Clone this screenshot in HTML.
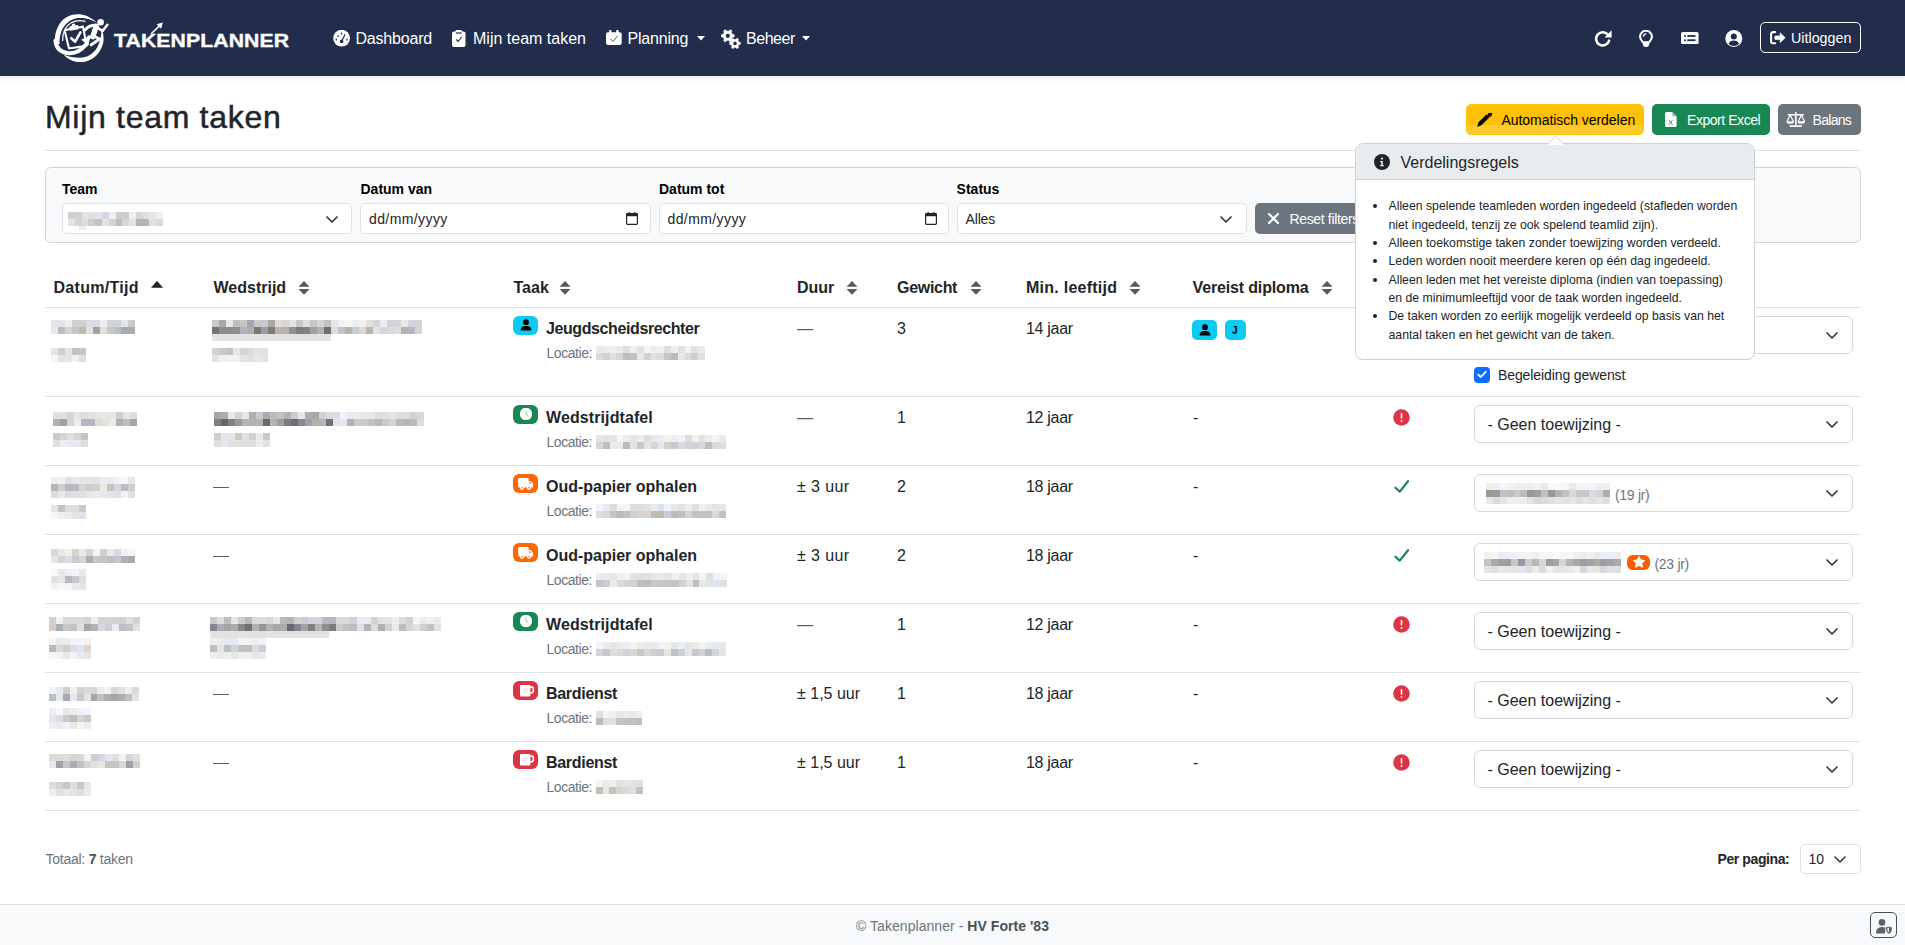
<!DOCTYPE html>
<html><head><meta charset="utf-8"><title>Mijn team taken</title>
<style>
html,body{margin:0;padding:0;background:#fff;width:1905px;height:945px;overflow:hidden;position:relative;font-family:"Liberation Sans", sans-serif;}
.a{position:absolute;display:block}
.t{position:absolute;white-space:nowrap;font-family:"Liberation Sans", sans-serif}
</style></head><body>
<div class="a" style="left:0.00px;top:0.00px;width:1905.00px;height:76.00px;background:#212d4b;box-shadow:0 3px 4px rgba(0,0,0,.075)"></div><svg class="a" style="left:50.00px;top:10.00px;" width="65" height="56" viewBox="0 0 65 56">
<path d="M5.2 34 C3.5 24 8 12 16.5 7.2 C24 3 36 2.5 46.5 12.5 C42 9.8 35 7.5 28.4 8 C20.5 8.8 14.5 14 11.5 21 C9.6 26 9.4 30.5 9.6 34 Z" fill="#fff"/>
<path d="M12.6 31 C12.5 23 15.5 16 21.5 12.6 C26 10.3 31 10.2 35.5 11.4" stroke="#fff" stroke-width="1.2" fill="none"/>
<path d="M13.5 44.5 C18 49.8 25 52.6 33 52 C42.5 51 50.8 43.5 53.3 32.5 C54.2 27.5 53.2 22 51.3 19 C51.8 24.5 50.5 31.5 47.2 37.5 C43.5 44 37 47.8 30 47.8 C24 47.8 18.5 46.6 13.5 44.5 Z" fill="#fff"/>
<path d="M20 49 C30 53.5 41 50.5 47.5 43" stroke="#fff" stroke-width="1.3" fill="none"/>
<path d="M5.4 30.5 C6.2 38.5 11 42.5 18.5 43.2 C26.5 44 31.5 40.2 36 34.6 L37 33.2" stroke="#fff" stroke-width="4" fill="none" stroke-linecap="round"/>
<path d="M40.6 25.8 L31.2 29.4 L38.2 35.8 Z" fill="#fff"/>
<path d="M14.5 20.1 L32.9 16.6 L35.3 28.2 M37.3 35.6 L19 38.5 L14.5 20.1" stroke="#fff" stroke-width="2.1" fill="none" stroke-linejoin="round"/>
<path d="M19.2 16.6 L27.8 15 L28.6 19.2 L20 20.8 Z" fill="#fff"/>
<circle cx="23.6" cy="15.2" r="1.8" fill="#fff"/>
<path d="M21.3 28.2 L25.2 31.7 L30.4 22.3" stroke="#fff" stroke-width="2.5" fill="none" stroke-linecap="round" stroke-linejoin="round"/>
<circle cx="50.6" cy="12.2" r="3.3" fill="#fff"/>
<path d="M35.2 19.8 C38.5 16.2 42 15 46 15.4" stroke="#fff" stroke-width="3" fill="none" stroke-linecap="round"/>
<path d="M46.2 16.2 L42.8 26.8" stroke="#fff" stroke-width="5.4" fill="none" stroke-linecap="round"/>
<path d="M47.5 17.8 L52.8 20.8 L57.4 14.8" stroke="#fff" stroke-width="2.6" fill="none" stroke-linecap="round" stroke-linejoin="round"/>
<path d="M43.5 26 L49.8 29 L41.2 34.8" stroke="#fff" stroke-width="3" fill="none" stroke-linecap="round" stroke-linejoin="round"/>
<path d="M43 26.5 L38.6 27 L37.2 30.5" stroke="#fff" stroke-width="2.8" fill="none" stroke-linecap="round" stroke-linejoin="round"/>
</svg><div class="t " style="left:114.00px;top:27.32px;font-size:19px;line-height:28px;font-weight:700;color:#fff;transform:scaleX(1.115);transform-origin:0 0;letter-spacing:0.1px;-webkit-text-stroke:0.35px #fff">TAKENPLANNER</div><svg class="a" style="left:150.00px;top:22.00px;" width="14" height="13" viewBox="0 0 14 13"><path d="M1.5 11.5 L10.5 2.8" stroke="#fff" stroke-width="1.6" stroke-linecap="round"/><path d="M12.8 0.6 L6.6 2.2 L11.2 6.8 Z" fill="#fff"/></svg><svg class="a" style="left:333.00px;top:29.70px;" width="17" height="17" viewBox="0 0 17 17"><circle cx="8.6" cy="8.2" r="8.4" fill="#fff"/><rect x="7.9" y="2.5" width="1.3" height="1.9" rx="0.5" fill="#212d4b"/><rect x="4.2" y="5.5" width="1.9" height="1.2" rx="0.5" fill="#212d4b"/><rect x="2.6" y="8.6" width="1.3" height="1.9" rx="0.5" fill="#212d4b"/><rect x="13.3" y="8.6" width="1.3" height="1.9" rx="0.5" fill="#212d4b"/><path d="M8.6 11.4 L11.8 4.7" stroke="#212d4b" stroke-width="1.2" stroke-linecap="round"/><circle cx="8.6" cy="11.4" r="1.8" fill="#212d4b"/></svg><div class="t " style="left:355.50px;top:26.96px;font-size:16px;line-height:24px;font-weight:400;color:#fff;letter-spacing:-0.2px">Dashboard</div><svg class="a" style="left:452.00px;top:29.50px;" width="14" height="17" viewBox="0 0 14 17"><rect x="0" y="1.5" width="13.5" height="15.5" rx="2" fill="#fff"/><rect x="3.5" y="0" width="6.5" height="3.5" rx="1.2" fill="#fff"/><rect x="3.8" y="2.4" width="5.9" height="1.2" fill="#212d4b"/><path d="M4.2 9.5 L6.2 11.5 L9.6 7" stroke="#212d4b" stroke-width="1.1" fill="none"/></svg><div class="t " style="left:473.00px;top:26.96px;font-size:16px;line-height:24px;font-weight:400;color:#fff;">Mijn team taken</div><svg class="a" style="left:605.50px;top:30.00px;" width="16" height="17" viewBox="0 0 16 17"><rect x="0" y="2.3" width="15.7" height="12.7" rx="2" fill="#fff"/><rect x="3" y="0" width="2.6" height="4" rx="1" fill="#fff"/><rect x="10.1" y="0" width="2.6" height="4" rx="1" fill="#fff"/><path d="M4.5 9 L7 11.5 L11.5 6" stroke="#212d4b" stroke-width="1" fill="none" opacity="0.8"/></svg><div class="t " style="left:627.50px;top:26.96px;font-size:16px;line-height:24px;font-weight:400;color:#fff;letter-spacing:-0.2px">Planning</div><svg class="a" style="left:697.00px;top:36.00px;" width="8" height="5" viewBox="0 0 8 5"><path d="M0 0 H8 L4 4.5 Z" fill="#fff"/></svg><svg class="a" style="left:721.00px;top:28.50px;" width="20" height="20" viewBox="0 0 20 20"><polygon points="11.43,5.24 13.32,5.77 13.32,7.83 11.43,8.36 10.46,10.03 10.95,11.93 9.17,12.96 7.77,11.59 5.83,11.59 4.43,12.96 2.65,11.93 3.14,10.03 2.17,8.36 0.28,7.83 0.28,5.77 2.17,5.24 3.14,3.57 2.65,1.67 4.43,0.64 5.83,2.01 7.77,2.01 9.17,0.64 10.95,1.67 10.46,3.57" fill="#fff" stroke="#fff" stroke-width="0.5" stroke-linejoin="round"/><circle cx="6.8" cy="6.8" r="2.11" fill="#212d4b"/><polygon points="17.93,13.08 19.53,13.52 19.53,15.28 17.93,15.72 17.11,17.14 17.52,18.75 16.01,19.63 14.82,18.46 13.18,18.46 11.99,19.63 10.48,18.75 10.89,17.14 10.07,15.72 8.47,15.28 8.47,13.52 10.07,13.08 10.89,11.66 10.48,10.05 11.99,9.17 13.18,10.34 14.82,10.34 16.01,9.17 17.52,10.05 17.11,11.66" fill="#fff" stroke="#fff" stroke-width="0.5" stroke-linejoin="round"/><circle cx="14" cy="14.4" r="1.79" fill="#212d4b"/></svg><div class="t " style="left:746.00px;top:26.96px;font-size:16px;line-height:24px;font-weight:400;color:#fff;letter-spacing:-0.45px">Beheer</div><svg class="a" style="left:802.00px;top:36.00px;" width="8" height="5" viewBox="0 0 8 5"><path d="M0 0 H8 L4 4.5 Z" fill="#fff"/></svg><svg class="a" style="left:1593.50px;top:29.50px;" width="18" height="17" viewBox="0 0 18 17"><path d="M14.2 5.2 A6.6 6.6 0 1 0 15.1 10.6" stroke="#fff" stroke-width="2.5" fill="none" stroke-linecap="round"/><path d="M17.6 0.3 V7.4 H10.6 Z" fill="#fff"/></svg><svg class="a" style="left:1639.00px;top:29.50px;" width="14" height="17" viewBox="0 0 14 17"><path d="M3.2 11.2 C1.7 9.8 1.1 8.4 1.1 6.6 A5.9 5.9 0 0 1 12.9 6.6 C12.9 8.4 12.3 9.8 10.8 11.2 L10.2 12.2 H3.8 Z" stroke="#fff" stroke-width="2.1" fill="none" stroke-linejoin="round"/><path d="M3.9 13 H10.1 V14.6 A2.4 2.4 0 0 1 7.7 17 H6.3 A2.4 2.4 0 0 1 3.9 14.6 Z" fill="#fff"/><path d="M4.6 6.2 A2.6 2.6 0 0 1 7 3.8" stroke="#fff" stroke-width="1.3" fill="none" stroke-linecap="round"/></svg><svg class="a" style="left:1681.00px;top:32.00px;" width="18" height="12.2" viewBox="0 0 18 12.2"><rect x="0" y="0" width="17.6" height="12.2" rx="1.8" fill="#fff"/><circle cx="4" cy="4" r="1" fill="#212d4b"/><rect x="6.3" y="3.1" width="8.2" height="1.8" fill="#212d4b"/><circle cx="4" cy="8.2" r="1" fill="#212d4b"/><rect x="6.3" y="7.3" width="8.2" height="1.8" fill="#212d4b"/></svg><svg class="a" style="left:1725.00px;top:29.50px;" width="18" height="17" viewBox="0 0 18 17"><circle cx="8.8" cy="8.5" r="8.5" fill="#fff"/><circle cx="8.8" cy="6.6" r="3" fill="#212d4b"/><path d="M3.6 13.8 C4.6 11.6 6.4 10.6 8.8 10.6 C11.2 10.6 13 11.6 14 13.8 C12.6 15.2 10.8 16 8.8 16 C6.8 16 5 15.2 3.6 13.8 Z" fill="#212d4b"/></svg><div class="a" style="left:1760.00px;top:22.00px;width:101.00px;height:31.00px;border:1px solid #fff;border-radius:5px;box-sizing:border-box"></div><svg class="a" style="left:1770.00px;top:30.60px;" width="16" height="14" viewBox="0 0 16 14"><path d="M5.2 1.1 H3 A1.9 1.9 0 0 0 1.1 3 V10.4 A1.9 1.9 0 0 0 3 12.3 H5.2" stroke="#fff" stroke-width="2.1" fill="none" stroke-linecap="round"/><path d="M15.2 6.7 L10.2 1.9 V5 H5.6 A0.9 0.9 0 0 0 4.7 5.9 V7.5 A0.9 0.9 0 0 0 5.6 8.4 H10.2 V11.5 Z" fill="#fff" stroke="#fff" stroke-width="0.7" stroke-linejoin="round"/></svg><div class="t " style="left:1791.00px;top:28.05px;font-size:14px;line-height:21px;font-weight:400;color:#fff;font-size:14.3px">Uitloggen</div><div class="t " style="left:45.00px;top:97.81px;font-size:32px;line-height:38px;font-weight:400;color:#212529;letter-spacing:0.7px;-webkit-text-stroke:0.5px #212529">Mijn team taken</div><div class="a" style="left:45.00px;top:150.00px;width:1816.00px;height:1.00px;background:#dee2e6"></div><div class="a" style="left:1466.00px;top:104.00px;width:178.00px;height:31.00px;background:linear-gradient(#ffc107 0 20px,#ffca2c 20px);border:1px solid #ffc107;border-radius:5px;box-sizing:border-box"></div><svg class="a" style="left:1477.00px;top:112.50px;" width="15" height="14" viewBox="0 0 15 14"><path d="M0.4 13.6 L1.86 9.26 L9.46 1.66 L12.14 4.34 L4.54 11.94 Z" fill="#000" stroke="#000" stroke-width="0.4" stroke-linejoin="round"/><path d="M11.9 1.2 L12.9 0.2" stroke="#000" stroke-width="3.8" stroke-linecap="round" transform="translate(0.6,0.6)"/></svg><div class="t " style="left:1501.50px;top:109.85px;font-size:14px;line-height:21px;font-weight:400;color:#000;letter-spacing:-0.05px">Automatisch verdelen</div><div class="a" style="left:1652.00px;top:104.00px;width:118.00px;height:31.00px;background:#198754;border-radius:5px"></div><svg class="a" style="left:1664.50px;top:112.00px;" width="12" height="15" viewBox="0 0 12 15"><path d="M0 1.6 A1.6 1.6 0 0 1 1.6 0 H7.4 L11.6 4.2 V13.4 A1.6 1.6 0 0 1 10 15 H1.6 A1.6 1.6 0 0 1 0 13.4 Z" fill="#fff"/><path d="M7.4 0 V4.2 H11.6" fill="#198754" opacity="0.5"/><path d="M4 8.2 L7.4 12.6 M7.4 8.2 L4 12.6" stroke="#198754" stroke-width="0.9"/></svg><div class="t " style="left:1687.00px;top:109.85px;font-size:14px;line-height:21px;font-weight:400;color:#fff;letter-spacing:-0.45px">Export Excel</div><div class="a" style="left:1778.00px;top:104.00px;width:83.00px;height:31.00px;background:#6c757d;border-radius:5px"></div><svg class="a" style="left:1786.00px;top:112.00px;" width="19.4" height="15" viewBox="0 0 19.4 15"><rect x="9" y="0" width="1.6" height="13" fill="#fff"/><rect x="1.6" y="2" width="16.4" height="1.6" rx="0.8" fill="#fff"/><rect x="3.5" y="13.2" width="12.6" height="1.8" rx="0.9" fill="#fff"/><path d="M4.2 3 L1 9.4 M4.2 3 L7.4 9.4" stroke="#fff" stroke-width="1.2"/><path d="M0.4 9.2 H8 A3.8 2.6 0 0 1 0.4 9.2 Z" fill="#fff"/><path d="M15.4 3 L12.2 9.4 M15.4 3 L18.6 9.4" stroke="#fff" stroke-width="1.2"/><path d="M11.6 9.2 H19.2 A3.8 2.6 0 0 1 11.6 9.2 Z" fill="#fff"/></svg><div class="t " style="left:1812.50px;top:109.85px;font-size:14px;line-height:21px;font-weight:400;color:#fff;letter-spacing:-0.7px">Balans</div><div class="a" style="left:45.00px;top:167.00px;width:1816.00px;height:76.00px;background:#f8f9fa;border:1px solid #d3d4d5;border-radius:6px;box-sizing:border-box"></div><div class="t " style="left:62.00px;top:179.15px;font-size:14px;line-height:21px;font-weight:700;color:#000;">Team</div><div class="t " style="left:360.50px;top:179.15px;font-size:14px;line-height:21px;font-weight:700;color:#000;">Datum van</div><div class="t " style="left:659.00px;top:179.15px;font-size:14px;line-height:21px;font-weight:700;color:#000;">Datum tot</div><div class="t " style="left:956.60px;top:179.15px;font-size:14px;line-height:21px;font-weight:700;color:#000;">Status</div><div class="a" style="left:62.00px;top:203.00px;width:290.20px;height:31.00px;background:#fff;border:1px solid #dee2e6;border-radius:5px;box-sizing:border-box"></div><svg class="a" style="left:325.50px;top:215.50px;" width="12" height="7" viewBox="0 0 12 7"><path d="M1 1 L6 6 L11 1" stroke="#343a40" stroke-width="1.7" fill="none" stroke-linecap="round" stroke-linejoin="round"/></svg><div class="a" style="left:360.40px;top:203.00px;width:290.20px;height:31.00px;background:#fff;border:1px solid #dee2e6;border-radius:5px;box-sizing:border-box"></div><svg class="a" style="left:626.40px;top:211.50px;" width="12" height="13" viewBox="0 0 12 13"><rect x="0.6" y="1.6" width="10.8" height="10.8" rx="0.8" stroke="#212529" stroke-width="1.2" fill="none"/><rect x="0.6" y="1.6" width="10.8" height="2.6" fill="#212529"/><rect x="2.6" y="0" width="1.2" height="2" fill="#212529"/><rect x="8.2" y="0" width="1.2" height="2" fill="#212529"/></svg><div class="a" style="left:658.70px;top:203.00px;width:290.20px;height:31.00px;background:#fff;border:1px solid #dee2e6;border-radius:5px;box-sizing:border-box"></div><svg class="a" style="left:924.70px;top:211.50px;" width="12" height="13" viewBox="0 0 12 13"><rect x="0.6" y="1.6" width="10.8" height="10.8" rx="0.8" stroke="#212529" stroke-width="1.2" fill="none"/><rect x="0.6" y="1.6" width="10.8" height="2.6" fill="#212529"/><rect x="2.6" y="0" width="1.2" height="2" fill="#212529"/><rect x="8.2" y="0" width="1.2" height="2" fill="#212529"/></svg><div class="a" style="left:956.60px;top:203.00px;width:290.20px;height:31.00px;background:#fff;border:1px solid #dee2e6;border-radius:5px;box-sizing:border-box"></div><svg class="a" style="left:1220.10px;top:215.50px;" width="12" height="7" viewBox="0 0 12 7"><path d="M1 1 L6 6 L11 1" stroke="#343a40" stroke-width="1.7" fill="none" stroke-linecap="round" stroke-linejoin="round"/></svg><svg class="a" style="left:68.00px;top:212.00px;shape-rendering:crispEdges" width="95" height="14" viewBox="0 0 95 14"><rect x="0.00" y="0.00" width="7.09" height="7.30" fill="rgb(205,209,214)"/><rect x="6.79" y="0.00" width="7.09" height="7.30" fill="rgb(211,209,211)"/><rect x="13.57" y="0.00" width="7.09" height="7.30" fill="rgb(227,229,229)"/><rect x="20.36" y="0.00" width="7.09" height="7.30" fill="rgb(224,223,225)"/><rect x="27.14" y="0.00" width="7.09" height="7.30" fill="rgb(222,227,236)"/><rect x="33.93" y="0.00" width="7.09" height="7.30" fill="rgb(212,214,222)"/><rect x="40.71" y="0.00" width="7.09" height="7.30" fill="rgb(239,239,236)"/><rect x="47.50" y="0.00" width="7.09" height="7.30" fill="rgb(210,205,205)"/><rect x="54.29" y="0.00" width="7.09" height="7.30" fill="rgb(206,205,204)"/><rect x="61.07" y="0.00" width="7.09" height="7.30" fill="rgb(235,240,250)"/><rect x="67.86" y="0.00" width="7.09" height="7.30" fill="rgb(215,213,215)"/><rect x="74.64" y="0.00" width="7.09" height="7.30" fill="rgb(225,225,225)"/><rect x="81.43" y="0.00" width="7.09" height="7.30" fill="rgb(232,230,229)"/><rect x="88.21" y="0.00" width="7.09" height="7.30" fill="rgb(240,239,243)"/><rect x="0.00" y="7.00" width="7.09" height="7.30" fill="rgb(226,230,233)"/><rect x="6.79" y="7.00" width="7.09" height="7.30" fill="rgb(211,212,211)"/><rect x="13.57" y="7.00" width="7.09" height="7.30" fill="rgb(222,219,219)"/><rect x="20.36" y="7.00" width="7.09" height="7.30" fill="rgb(210,205,200)"/><rect x="27.14" y="7.00" width="7.09" height="7.30" fill="rgb(197,193,193)"/><rect x="33.93" y="7.00" width="7.09" height="7.30" fill="rgb(228,225,225)"/><rect x="40.71" y="7.00" width="7.09" height="7.30" fill="rgb(205,210,219)"/><rect x="47.50" y="7.00" width="7.09" height="7.30" fill="rgb(190,189,191)"/><rect x="54.29" y="7.00" width="7.09" height="7.30" fill="rgb(214,214,219)"/><rect x="61.07" y="7.00" width="7.09" height="7.30" fill="rgb(232,227,224)"/><rect x="67.86" y="7.00" width="7.09" height="7.30" fill="rgb(185,180,180)"/><rect x="74.64" y="7.00" width="7.09" height="7.30" fill="rgb(178,181,189)"/><rect x="81.43" y="7.00" width="7.09" height="7.30" fill="rgb(225,225,229)"/><rect x="88.21" y="7.00" width="7.09" height="7.30" fill="rgb(220,218,213)"/></svg><div class="a" style="left:79.00px;top:226.00px;width:7.00px;height:4.00px;background:#ececec"></div><div class="t " style="left:369.00px;top:209.35px;font-size:14px;line-height:21px;font-weight:400;color:#212529;letter-spacing:0.4px">dd/mm/yyyy</div><div class="t " style="left:667.50px;top:209.35px;font-size:14px;line-height:21px;font-weight:400;color:#212529;letter-spacing:0.4px">dd/mm/yyyy</div><div class="t " style="left:965.60px;top:208.85px;font-size:14px;line-height:21px;font-weight:400;color:#212529;letter-spacing:-0.2px">Alles</div><div class="a" style="left:1255.00px;top:203.00px;width:290.00px;height:31.00px;background:#6c757d;border-radius:5px"></div><svg class="a" style="left:1267.50px;top:213.00px;" width="11" height="11" viewBox="0 0 11 11"><path d="M1 1 L10 10 M10 1 L1 10" stroke="#fff" stroke-width="2.2" stroke-linecap="round"/></svg><div class="t " style="left:1289.50px;top:208.85px;font-size:14px;line-height:21px;font-weight:400;color:#fff;letter-spacing:-0.35px">Reset filters</div><div class="t " style="left:53.50px;top:275.96px;font-size:16px;line-height:24px;font-weight:700;color:#212529;letter-spacing:0.3px">Datum/Tijd</div><svg class="a" style="left:151.00px;top:281.00px;" width="12" height="7" viewBox="0 0 12 7"><path d="M6 0.2 L11.5 6.4 H0.5 Z" fill="#212529" stroke="#212529" stroke-width="0.6" stroke-linejoin="round"/></svg><div class="t " style="left:213.50px;top:275.96px;font-size:16px;line-height:24px;font-weight:700;color:#212529;letter-spacing:0px">Wedstrijd</div><svg class="a" style="left:297.50px;top:281.00px;" width="12" height="14" viewBox="0 0 12 14"><path d="M6 0 L11.5 5.8 H0.5 Z M0.5 8 H11.5 L6 13.8 Z" fill="#555b61"/></svg><div class="t " style="left:513.50px;top:275.96px;font-size:16px;line-height:24px;font-weight:700;color:#212529;letter-spacing:0px">Taak</div><svg class="a" style="left:558.50px;top:281.00px;" width="12" height="14" viewBox="0 0 12 14"><path d="M6 0 L11.5 5.8 H0.5 Z M0.5 8 H11.5 L6 13.8 Z" fill="#555b61"/></svg><div class="t " style="left:797.00px;top:275.96px;font-size:16px;line-height:24px;font-weight:700;color:#212529;letter-spacing:0px">Duur</div><svg class="a" style="left:846.00px;top:281.00px;" width="12" height="14" viewBox="0 0 12 14"><path d="M6 0 L11.5 5.8 H0.5 Z M0.5 8 H11.5 L6 13.8 Z" fill="#555b61"/></svg><div class="t " style="left:897.00px;top:275.96px;font-size:16px;line-height:24px;font-weight:700;color:#212529;letter-spacing:-0.3px">Gewicht</div><svg class="a" style="left:970.00px;top:281.00px;" width="12" height="14" viewBox="0 0 12 14"><path d="M6 0 L11.5 5.8 H0.5 Z M0.5 8 H11.5 L6 13.8 Z" fill="#555b61"/></svg><div class="t " style="left:1026.00px;top:275.96px;font-size:16px;line-height:24px;font-weight:700;color:#212529;letter-spacing:0.25px">Min. leeftijd</div><svg class="a" style="left:1129.00px;top:281.00px;" width="12" height="14" viewBox="0 0 12 14"><path d="M6 0 L11.5 5.8 H0.5 Z M0.5 8 H11.5 L6 13.8 Z" fill="#555b61"/></svg><div class="t " style="left:1192.50px;top:275.96px;font-size:16px;line-height:24px;font-weight:700;color:#212529;letter-spacing:-0.15px">Vereist diploma</div><svg class="a" style="left:1321.00px;top:281.00px;" width="12" height="14" viewBox="0 0 12 14"><path d="M6 0 L11.5 5.8 H0.5 Z M0.5 8 H11.5 L6 13.8 Z" fill="#555b61"/></svg><div class="t " style="left:1372.00px;top:275.96px;font-size:16px;line-height:24px;font-weight:700;color:#212529;letter-spacing:0px">Status</div><svg class="a" style="left:1430.00px;top:281.00px;" width="12" height="14" viewBox="0 0 12 14"><path d="M6 0 L11.5 5.8 H0.5 Z M0.5 8 H11.5 L6 13.8 Z" fill="#555b61"/></svg><div class="t " style="left:1474.00px;top:275.96px;font-size:16px;line-height:24px;font-weight:700;color:#212529;letter-spacing:0px">Toewijzing</div><svg class="a" style="left:1560.00px;top:281.00px;" width="12" height="14" viewBox="0 0 12 14"><path d="M6 0 L11.5 5.8 H0.5 Z M0.5 8 H11.5 L6 13.8 Z" fill="#555b61"/></svg><div class="a" style="left:45.00px;top:307.00px;width:1816.00px;height:1.00px;background:#dee2e6"></div><div class="a" style="left:45.00px;top:396.00px;width:1816.00px;height:1.00px;background:#dee2e6"></div><svg class="a" style="left:51.00px;top:320.00px;shape-rendering:crispEdges" width="84" height="14" viewBox="0 0 84 14"><rect x="0.00" y="0.00" width="7.30" height="7.30" fill="rgb(228,227,230)"/><rect x="7.00" y="0.00" width="7.30" height="7.30" fill="rgb(226,228,234)"/><rect x="14.00" y="0.00" width="7.30" height="7.30" fill="rgb(236,237,237)"/><rect x="21.00" y="0.00" width="7.30" height="7.30" fill="rgb(208,206,206)"/><rect x="28.00" y="0.00" width="7.30" height="7.30" fill="rgb(208,208,205)"/><rect x="35.00" y="0.00" width="7.30" height="7.30" fill="rgb(218,221,230)"/><rect x="42.00" y="0.00" width="7.30" height="7.30" fill="rgb(220,219,219)"/><rect x="49.00" y="0.00" width="7.30" height="7.30" fill="rgb(237,238,243)"/><rect x="56.00" y="0.00" width="7.30" height="7.30" fill="rgb(210,211,214)"/><rect x="63.00" y="0.00" width="7.30" height="7.30" fill="rgb(208,210,216)"/><rect x="70.00" y="0.00" width="7.30" height="7.30" fill="rgb(224,229,240)"/><rect x="77.00" y="0.00" width="7.30" height="7.30" fill="rgb(202,205,208)"/><rect x="0.00" y="7.00" width="7.30" height="7.30" fill="rgb(232,233,239)"/><rect x="7.00" y="7.00" width="7.30" height="7.30" fill="rgb(186,188,192)"/><rect x="14.00" y="7.00" width="7.30" height="7.30" fill="rgb(214,212,213)"/><rect x="21.00" y="7.00" width="7.30" height="7.30" fill="rgb(201,196,197)"/><rect x="28.00" y="7.00" width="7.30" height="7.30" fill="rgb(188,185,181)"/><rect x="35.00" y="7.00" width="7.30" height="7.30" fill="rgb(226,225,224)"/><rect x="42.00" y="7.00" width="7.30" height="7.30" fill="rgb(164,162,161)"/><rect x="49.00" y="7.00" width="7.30" height="7.30" fill="rgb(228,223,216)"/><rect x="56.00" y="7.00" width="7.30" height="7.30" fill="rgb(197,201,204)"/><rect x="63.00" y="7.00" width="7.30" height="7.30" fill="rgb(189,189,195)"/><rect x="70.00" y="7.00" width="7.30" height="7.30" fill="rgb(167,171,179)"/><rect x="77.00" y="7.00" width="7.30" height="7.30" fill="rgb(170,172,176)"/></svg><svg class="a" style="left:51.00px;top:348.00px;shape-rendering:crispEdges" width="35" height="14" viewBox="0 0 35 14"><rect x="0.00" y="0.00" width="7.30" height="7.30" fill="rgb(233,228,222)"/><rect x="7.00" y="0.00" width="7.30" height="7.30" fill="rgb(209,204,197)"/><rect x="14.00" y="0.00" width="7.30" height="7.30" fill="rgb(231,227,222)"/><rect x="21.00" y="0.00" width="7.30" height="7.30" fill="rgb(196,195,192)"/><rect x="28.00" y="0.00" width="7.30" height="7.30" fill="rgb(198,198,202)"/><rect x="0.00" y="7.00" width="7.30" height="7.30" fill="rgb(246,244,245)"/><rect x="7.00" y="7.00" width="7.30" height="7.30" fill="rgb(227,227,229)"/><rect x="14.00" y="7.00" width="7.30" height="7.30" fill="rgb(225,229,238)"/><rect x="21.00" y="7.00" width="7.30" height="7.30" fill="rgb(243,241,242)"/><rect x="28.00" y="7.00" width="7.30" height="7.30" fill="rgb(227,223,219)"/></svg><svg class="a" style="left:212.30px;top:320.00px;shape-rendering:crispEdges" width="119" height="14" viewBox="0 0 119 14"><rect x="0.00" y="0.00" width="7.30" height="7.30" fill="rgb(201,202,209)"/><rect x="7.00" y="0.00" width="7.30" height="7.30" fill="rgb(172,167,162)"/><rect x="14.00" y="0.00" width="7.30" height="7.30" fill="rgb(228,233,241)"/><rect x="21.00" y="0.00" width="7.30" height="7.30" fill="rgb(188,191,192)"/><rect x="28.00" y="0.00" width="7.30" height="7.30" fill="rgb(200,197,194)"/><rect x="35.00" y="0.00" width="7.30" height="7.30" fill="rgb(163,166,175)"/><rect x="42.00" y="0.00" width="7.30" height="7.30" fill="rgb(203,202,203)"/><rect x="49.00" y="0.00" width="7.30" height="7.30" fill="rgb(198,202,209)"/><rect x="56.00" y="0.00" width="7.30" height="7.30" fill="rgb(170,166,163)"/><rect x="63.00" y="0.00" width="7.30" height="7.30" fill="rgb(222,218,212)"/><rect x="70.00" y="0.00" width="7.30" height="7.30" fill="rgb(217,212,212)"/><rect x="77.00" y="0.00" width="7.30" height="7.30" fill="rgb(223,227,237)"/><rect x="84.00" y="0.00" width="7.30" height="7.30" fill="rgb(198,199,199)"/><rect x="91.00" y="0.00" width="7.30" height="7.30" fill="rgb(222,223,225)"/><rect x="98.00" y="0.00" width="7.30" height="7.30" fill="rgb(197,200,203)"/><rect x="105.00" y="0.00" width="7.30" height="7.30" fill="rgb(209,213,214)"/><rect x="112.00" y="0.00" width="7.30" height="7.30" fill="rgb(196,193,191)"/><rect x="0.00" y="7.00" width="7.30" height="7.30" fill="rgb(120,115,109)"/><rect x="7.00" y="7.00" width="7.30" height="7.30" fill="rgb(140,140,145)"/><rect x="14.00" y="7.00" width="7.30" height="7.30" fill="rgb(143,138,135)"/><rect x="21.00" y="7.00" width="7.30" height="7.30" fill="rgb(140,144,145)"/><rect x="28.00" y="7.00" width="7.30" height="7.30" fill="rgb(175,179,187)"/><rect x="35.00" y="7.00" width="7.30" height="7.30" fill="rgb(173,174,179)"/><rect x="42.00" y="7.00" width="7.30" height="7.30" fill="rgb(120,121,121)"/><rect x="49.00" y="7.00" width="7.30" height="7.30" fill="rgb(155,158,166)"/><rect x="56.00" y="7.00" width="7.30" height="7.30" fill="rgb(129,124,119)"/><rect x="63.00" y="7.00" width="7.30" height="7.30" fill="rgb(181,179,179)"/><rect x="70.00" y="7.00" width="7.30" height="7.30" fill="rgb(183,179,176)"/><rect x="77.00" y="7.00" width="7.30" height="7.30" fill="rgb(144,143,145)"/><rect x="84.00" y="7.00" width="7.30" height="7.30" fill="rgb(130,125,124)"/><rect x="91.00" y="7.00" width="7.30" height="7.30" fill="rgb(134,131,127)"/><rect x="98.00" y="7.00" width="7.30" height="7.30" fill="rgb(160,161,167)"/><rect x="105.00" y="7.00" width="7.30" height="7.30" fill="rgb(174,179,184)"/><rect x="112.00" y="7.00" width="7.30" height="7.30" fill="rgb(110,110,115)"/></svg><svg class="a" style="left:331.30px;top:320.00px;shape-rendering:crispEdges" width="91" height="14" viewBox="0 0 91 14"><rect x="0.00" y="0.00" width="7.30" height="7.30" fill="rgb(227,230,235)"/><rect x="7.00" y="0.00" width="7.30" height="7.30" fill="rgb(241,242,246)"/><rect x="14.00" y="0.00" width="7.30" height="7.30" fill="rgb(250,246,239)"/><rect x="21.00" y="0.00" width="7.30" height="7.30" fill="rgb(237,238,241)"/><rect x="28.00" y="0.00" width="7.30" height="7.30" fill="rgb(244,240,234)"/><rect x="35.00" y="0.00" width="7.30" height="7.30" fill="rgb(226,223,217)"/><rect x="42.00" y="0.00" width="7.30" height="7.30" fill="rgb(215,213,213)"/><rect x="49.00" y="0.00" width="7.30" height="7.30" fill="rgb(237,237,241)"/><rect x="56.00" y="0.00" width="7.30" height="7.30" fill="rgb(209,211,215)"/><rect x="63.00" y="0.00" width="7.30" height="7.30" fill="rgb(212,212,211)"/><rect x="70.00" y="0.00" width="7.30" height="7.30" fill="rgb(233,231,231)"/><rect x="77.00" y="0.00" width="7.30" height="7.30" fill="rgb(210,213,222)"/><rect x="84.00" y="0.00" width="7.30" height="7.30" fill="rgb(209,212,220)"/><rect x="0.00" y="7.00" width="7.30" height="7.30" fill="rgb(220,218,220)"/><rect x="7.00" y="7.00" width="7.30" height="7.30" fill="rgb(198,194,193)"/><rect x="14.00" y="7.00" width="7.30" height="7.30" fill="rgb(181,177,177)"/><rect x="21.00" y="7.00" width="7.30" height="7.30" fill="rgb(200,205,208)"/><rect x="28.00" y="7.00" width="7.30" height="7.30" fill="rgb(218,215,216)"/><rect x="35.00" y="7.00" width="7.30" height="7.30" fill="rgb(181,180,182)"/><rect x="42.00" y="7.00" width="7.30" height="7.30" fill="rgb(228,226,227)"/><rect x="49.00" y="7.00" width="7.30" height="7.30" fill="rgb(214,215,222)"/><rect x="56.00" y="7.00" width="7.30" height="7.30" fill="rgb(216,218,226)"/><rect x="63.00" y="7.00" width="7.30" height="7.30" fill="rgb(218,223,226)"/><rect x="70.00" y="7.00" width="7.30" height="7.30" fill="rgb(177,180,180)"/><rect x="77.00" y="7.00" width="7.30" height="7.30" fill="rgb(184,182,186)"/><rect x="84.00" y="7.00" width="7.30" height="7.30" fill="rgb(217,212,211)"/></svg><div class="a" style="left:212.30px;top:334.00px;width:119.00px;height:7.00px;background:#e2e2e2"></div><svg class="a" style="left:212.30px;top:348.00px;shape-rendering:crispEdges" width="56" height="14" viewBox="0 0 56 14"><rect x="0.00" y="0.00" width="7.30" height="7.30" fill="rgb(213,210,204)"/><rect x="7.00" y="0.00" width="7.30" height="7.30" fill="rgb(206,201,196)"/><rect x="14.00" y="0.00" width="7.30" height="7.30" fill="rgb(195,195,196)"/><rect x="21.00" y="0.00" width="7.30" height="7.30" fill="rgb(231,229,224)"/><rect x="28.00" y="0.00" width="7.30" height="7.30" fill="rgb(210,213,213)"/><rect x="35.00" y="0.00" width="7.30" height="7.30" fill="rgb(222,218,218)"/><rect x="42.00" y="0.00" width="7.30" height="7.30" fill="rgb(223,228,232)"/><rect x="49.00" y="0.00" width="7.30" height="7.30" fill="rgb(225,225,223)"/><rect x="0.00" y="7.00" width="7.30" height="7.30" fill="rgb(227,227,226)"/><rect x="7.00" y="7.00" width="7.30" height="7.30" fill="rgb(244,239,239)"/><rect x="14.00" y="7.00" width="7.30" height="7.30" fill="rgb(238,242,249)"/><rect x="21.00" y="7.00" width="7.30" height="7.30" fill="rgb(242,242,244)"/><rect x="28.00" y="7.00" width="7.30" height="7.30" fill="rgb(224,227,231)"/><rect x="35.00" y="7.00" width="7.30" height="7.30" fill="rgb(224,225,227)"/><rect x="42.00" y="7.00" width="7.30" height="7.30" fill="rgb(229,232,241)"/><rect x="49.00" y="7.00" width="7.30" height="7.30" fill="rgb(227,226,230)"/></svg><div class="a" style="left:513.00px;top:315.50px;width:25.00px;height:19.00px;background:#0dcaf0;border-radius:6px"></div><svg class="a" style="left:519.50px;top:319.00px;" width="12" height="12" viewBox="0 0 12 12"><circle cx="6" cy="3.2" r="2.9" fill="#000"/><path d="M0.6 11.6 C0.6 8.4 2.6 7 6 7 C9.4 7 11.4 8.4 11.4 11.6 Z" fill="#000"/></svg><div class="t " style="left:546.00px;top:316.66px;font-size:16px;line-height:24px;font-weight:700;color:#212529;letter-spacing:-0.4px">Jeugdscheidsrechter</div><div class="t " style="left:546.50px;top:342.85px;font-size:14px;line-height:21px;font-weight:400;color:#6c757d;letter-spacing:-0.45px">Locatie:</div><svg class="a" style="left:596.00px;top:345.80px;shape-rendering:crispEdges" width="109" height="14" viewBox="0 0 109 14"><rect x="0.00" y="0.00" width="7.11" height="7.30" fill="rgb(232,233,236)"/><rect x="6.81" y="0.00" width="7.11" height="7.30" fill="rgb(234,236,242)"/><rect x="13.62" y="0.00" width="7.11" height="7.30" fill="rgb(239,239,237)"/><rect x="20.44" y="0.00" width="7.11" height="7.30" fill="rgb(232,234,241)"/><rect x="27.25" y="0.00" width="7.11" height="7.30" fill="rgb(220,223,228)"/><rect x="34.06" y="0.00" width="7.11" height="7.30" fill="rgb(240,240,242)"/><rect x="40.88" y="0.00" width="7.11" height="7.30" fill="rgb(223,227,233)"/><rect x="47.69" y="0.00" width="7.11" height="7.30" fill="rgb(248,244,243)"/><rect x="54.50" y="0.00" width="7.11" height="7.30" fill="rgb(232,236,246)"/><rect x="61.31" y="0.00" width="7.11" height="7.30" fill="rgb(245,240,238)"/><rect x="68.12" y="0.00" width="7.11" height="7.30" fill="rgb(222,222,223)"/><rect x="74.94" y="0.00" width="7.11" height="7.30" fill="rgb(241,240,237)"/><rect x="81.75" y="0.00" width="7.11" height="7.30" fill="rgb(228,226,225)"/><rect x="88.56" y="0.00" width="7.11" height="7.30" fill="rgb(246,242,242)"/><rect x="95.38" y="0.00" width="7.11" height="7.30" fill="rgb(228,224,220)"/><rect x="102.19" y="0.00" width="7.11" height="7.30" fill="rgb(230,234,241)"/><rect x="0.00" y="7.00" width="7.11" height="7.30" fill="rgb(215,219,228)"/><rect x="6.81" y="7.00" width="7.11" height="7.30" fill="rgb(212,209,211)"/><rect x="13.62" y="7.00" width="7.11" height="7.30" fill="rgb(222,225,232)"/><rect x="20.44" y="7.00" width="7.11" height="7.30" fill="rgb(216,213,211)"/><rect x="27.25" y="7.00" width="7.11" height="7.30" fill="rgb(189,189,194)"/><rect x="34.06" y="7.00" width="7.11" height="7.30" fill="rgb(192,192,189)"/><rect x="40.88" y="7.00" width="7.11" height="7.30" fill="rgb(235,230,228)"/><rect x="47.69" y="7.00" width="7.11" height="7.30" fill="rgb(213,208,208)"/><rect x="54.50" y="7.00" width="7.11" height="7.30" fill="rgb(223,225,226)"/><rect x="61.31" y="7.00" width="7.11" height="7.30" fill="rgb(217,221,224)"/><rect x="68.12" y="7.00" width="7.11" height="7.30" fill="rgb(195,197,201)"/><rect x="74.94" y="7.00" width="7.11" height="7.30" fill="rgb(189,186,180)"/><rect x="81.75" y="7.00" width="7.11" height="7.30" fill="rgb(229,233,237)"/><rect x="88.56" y="7.00" width="7.11" height="7.30" fill="rgb(218,219,225)"/><rect x="95.38" y="7.00" width="7.11" height="7.30" fill="rgb(210,206,205)"/><rect x="102.19" y="7.00" width="7.11" height="7.30" fill="rgb(224,223,226)"/></svg><div class="t " style="left:797.00px;top:316.76px;font-size:16px;line-height:24px;font-weight:400;color:#5a5f64;letter-spacing:0px">—</div><div class="t " style="left:897.00px;top:316.76px;font-size:16px;line-height:24px;font-weight:400;color:#212529;">3</div><div class="t " style="left:1026.00px;top:316.76px;font-size:16px;line-height:24px;font-weight:400;color:#212529;letter-spacing:-0.3px">14 jaar</div><div class="a" style="left:1192.00px;top:319.50px;width:25.00px;height:20.00px;background:#0dcaf0;border-radius:5px"></div><svg class="a" style="left:1198.50px;top:323.50px;" width="12" height="12" viewBox="0 0 12 12"><circle cx="6" cy="3.2" r="2.9" fill="#000"/><path d="M0.6 11.6 C0.6 8.4 2.6 7 6 7 C9.4 7 11.4 8.4 11.4 11.6 Z" fill="#000"/></svg><div class="a" style="left:1225.00px;top:319.50px;width:21.00px;height:20.00px;background:#0dcaf0;border-radius:5px"></div><div class="t " style="left:1232.00px;top:323.04px;font-size:10px;line-height:15px;font-weight:700;color:#000;">J</div><div class="a" style="left:1474.00px;top:316.00px;width:379.00px;height:37.60px;background:#fff;border:1px solid #d5d9de;border-radius:6px;box-sizing:border-box"></div><svg class="a" style="left:1826.00px;top:331.50px;" width="12" height="7" viewBox="0 0 12 7"><path d="M1 1 L6 6 L11 1" stroke="#343a40" stroke-width="1.7" fill="none" stroke-linecap="round" stroke-linejoin="round"/></svg><div class="a" style="left:45.00px;top:465.00px;width:1816.00px;height:1.00px;background:#dee2e6"></div><svg class="a" style="left:53.00px;top:412.00px;shape-rendering:crispEdges" width="84" height="14" viewBox="0 0 84 14"><rect x="0.00" y="0.00" width="7.30" height="7.30" fill="rgb(226,223,224)"/><rect x="7.00" y="0.00" width="7.30" height="7.30" fill="rgb(227,223,219)"/><rect x="14.00" y="0.00" width="7.30" height="7.30" fill="rgb(215,212,213)"/><rect x="21.00" y="0.00" width="7.30" height="7.30" fill="rgb(227,230,231)"/><rect x="28.00" y="0.00" width="7.30" height="7.30" fill="rgb(219,222,223)"/><rect x="35.00" y="0.00" width="7.30" height="7.30" fill="rgb(231,226,218)"/><rect x="42.00" y="0.00" width="7.30" height="7.30" fill="rgb(229,228,231)"/><rect x="49.00" y="0.00" width="7.30" height="7.30" fill="rgb(235,231,226)"/><rect x="56.00" y="0.00" width="7.30" height="7.30" fill="rgb(232,229,224)"/><rect x="63.00" y="0.00" width="7.30" height="7.30" fill="rgb(205,207,209)"/><rect x="70.00" y="0.00" width="7.30" height="7.30" fill="rgb(230,228,228)"/><rect x="77.00" y="0.00" width="7.30" height="7.30" fill="rgb(220,222,229)"/><rect x="0.00" y="7.00" width="7.30" height="7.30" fill="rgb(177,178,183)"/><rect x="7.00" y="7.00" width="7.30" height="7.30" fill="rgb(156,160,168)"/><rect x="14.00" y="7.00" width="7.30" height="7.30" fill="rgb(212,211,215)"/><rect x="21.00" y="7.00" width="7.30" height="7.30" fill="rgb(233,237,242)"/><rect x="28.00" y="7.00" width="7.30" height="7.30" fill="rgb(182,184,191)"/><rect x="35.00" y="7.00" width="7.30" height="7.30" fill="rgb(178,182,192)"/><rect x="42.00" y="7.00" width="7.30" height="7.30" fill="rgb(220,219,216)"/><rect x="49.00" y="7.00" width="7.30" height="7.30" fill="rgb(227,226,223)"/><rect x="56.00" y="7.00" width="7.30" height="7.30" fill="rgb(239,234,226)"/><rect x="63.00" y="7.00" width="7.30" height="7.30" fill="rgb(171,176,185)"/><rect x="70.00" y="7.00" width="7.30" height="7.30" fill="rgb(190,189,191)"/><rect x="77.00" y="7.00" width="7.30" height="7.30" fill="rgb(170,165,160)"/></svg><svg class="a" style="left:53.00px;top:433.00px;shape-rendering:crispEdges" width="35" height="14" viewBox="0 0 35 14"><rect x="0.00" y="0.00" width="7.30" height="7.30" fill="rgb(202,201,201)"/><rect x="7.00" y="0.00" width="7.30" height="7.30" fill="rgb(210,212,218)"/><rect x="14.00" y="0.00" width="7.30" height="7.30" fill="rgb(227,224,220)"/><rect x="21.00" y="0.00" width="7.30" height="7.30" fill="rgb(211,213,212)"/><rect x="28.00" y="0.00" width="7.30" height="7.30" fill="rgb(199,195,194)"/><rect x="0.00" y="7.00" width="7.30" height="7.30" fill="rgb(221,223,225)"/><rect x="7.00" y="7.00" width="7.30" height="7.30" fill="rgb(239,238,240)"/><rect x="14.00" y="7.00" width="7.30" height="7.30" fill="rgb(231,236,243)"/><rect x="21.00" y="7.00" width="7.30" height="7.30" fill="rgb(230,234,240)"/><rect x="28.00" y="7.00" width="7.30" height="7.30" fill="rgb(218,222,224)"/></svg><svg class="a" style="left:214.00px;top:412.00px;shape-rendering:crispEdges" width="119" height="14" viewBox="0 0 119 14"><rect x="0.00" y="0.00" width="7.30" height="7.30" fill="rgb(161,165,172)"/><rect x="7.00" y="0.00" width="7.30" height="7.30" fill="rgb(169,174,178)"/><rect x="14.00" y="0.00" width="7.30" height="7.30" fill="rgb(234,231,228)"/><rect x="21.00" y="0.00" width="7.30" height="7.30" fill="rgb(211,214,216)"/><rect x="28.00" y="0.00" width="7.30" height="7.30" fill="rgb(228,233,235)"/><rect x="35.00" y="0.00" width="7.30" height="7.30" fill="rgb(177,174,175)"/><rect x="42.00" y="0.00" width="7.30" height="7.30" fill="rgb(199,201,209)"/><rect x="49.00" y="0.00" width="7.30" height="7.30" fill="rgb(166,171,179)"/><rect x="56.00" y="0.00" width="7.30" height="7.30" fill="rgb(186,188,192)"/><rect x="63.00" y="0.00" width="7.30" height="7.30" fill="rgb(196,192,188)"/><rect x="70.00" y="0.00" width="7.30" height="7.30" fill="rgb(177,179,184)"/><rect x="77.00" y="0.00" width="7.30" height="7.30" fill="rgb(208,205,199)"/><rect x="84.00" y="0.00" width="7.30" height="7.30" fill="rgb(228,231,236)"/><rect x="91.00" y="0.00" width="7.30" height="7.30" fill="rgb(171,174,180)"/><rect x="98.00" y="0.00" width="7.30" height="7.30" fill="rgb(170,167,168)"/><rect x="105.00" y="0.00" width="7.30" height="7.30" fill="rgb(208,210,212)"/><rect x="112.00" y="0.00" width="7.30" height="7.30" fill="rgb(220,220,220)"/><rect x="0.00" y="7.00" width="7.30" height="7.30" fill="rgb(126,128,134)"/><rect x="7.00" y="7.00" width="7.30" height="7.30" fill="rgb(103,103,104)"/><rect x="14.00" y="7.00" width="7.30" height="7.30" fill="rgb(129,128,131)"/><rect x="21.00" y="7.00" width="7.30" height="7.30" fill="rgb(154,154,154)"/><rect x="28.00" y="7.00" width="7.30" height="7.30" fill="rgb(178,182,187)"/><rect x="35.00" y="7.00" width="7.30" height="7.30" fill="rgb(179,176,179)"/><rect x="42.00" y="7.00" width="7.30" height="7.30" fill="rgb(184,179,175)"/><rect x="49.00" y="7.00" width="7.30" height="7.30" fill="rgb(105,107,106)"/><rect x="56.00" y="7.00" width="7.30" height="7.30" fill="rgb(182,178,176)"/><rect x="63.00" y="7.00" width="7.30" height="7.30" fill="rgb(155,159,166)"/><rect x="70.00" y="7.00" width="7.30" height="7.30" fill="rgb(123,124,125)"/><rect x="77.00" y="7.00" width="7.30" height="7.30" fill="rgb(107,109,113)"/><rect x="84.00" y="7.00" width="7.30" height="7.30" fill="rgb(132,137,147)"/><rect x="91.00" y="7.00" width="7.30" height="7.30" fill="rgb(159,160,159)"/><rect x="98.00" y="7.00" width="7.30" height="7.30" fill="rgb(179,174,167)"/><rect x="105.00" y="7.00" width="7.30" height="7.30" fill="rgb(179,181,185)"/><rect x="112.00" y="7.00" width="7.30" height="7.30" fill="rgb(110,113,120)"/></svg><svg class="a" style="left:333.00px;top:412.00px;shape-rendering:crispEdges" width="91" height="14" viewBox="0 0 91 14"><rect x="0.00" y="0.00" width="7.30" height="7.30" fill="rgb(217,222,228)"/><rect x="7.00" y="0.00" width="7.30" height="7.30" fill="rgb(238,243,253)"/><rect x="14.00" y="0.00" width="7.30" height="7.30" fill="rgb(231,233,236)"/><rect x="21.00" y="0.00" width="7.30" height="7.30" fill="rgb(238,237,238)"/><rect x="28.00" y="0.00" width="7.30" height="7.30" fill="rgb(234,231,226)"/><rect x="35.00" y="0.00" width="7.30" height="7.30" fill="rgb(233,231,232)"/><rect x="42.00" y="0.00" width="7.30" height="7.30" fill="rgb(224,223,222)"/><rect x="49.00" y="0.00" width="7.30" height="7.30" fill="rgb(220,224,233)"/><rect x="56.00" y="0.00" width="7.30" height="7.30" fill="rgb(226,228,235)"/><rect x="63.00" y="0.00" width="7.30" height="7.30" fill="rgb(223,221,225)"/><rect x="70.00" y="0.00" width="7.30" height="7.30" fill="rgb(225,222,218)"/><rect x="77.00" y="0.00" width="7.30" height="7.30" fill="rgb(211,210,213)"/><rect x="84.00" y="0.00" width="7.30" height="7.30" fill="rgb(213,215,220)"/><rect x="0.00" y="7.00" width="7.30" height="7.30" fill="rgb(226,228,234)"/><rect x="7.00" y="7.00" width="7.30" height="7.30" fill="rgb(230,231,238)"/><rect x="14.00" y="7.00" width="7.30" height="7.30" fill="rgb(182,177,177)"/><rect x="21.00" y="7.00" width="7.30" height="7.30" fill="rgb(205,202,200)"/><rect x="28.00" y="7.00" width="7.30" height="7.30" fill="rgb(198,202,206)"/><rect x="35.00" y="7.00" width="7.30" height="7.30" fill="rgb(197,193,188)"/><rect x="42.00" y="7.00" width="7.30" height="7.30" fill="rgb(183,185,189)"/><rect x="49.00" y="7.00" width="7.30" height="7.30" fill="rgb(204,201,195)"/><rect x="56.00" y="7.00" width="7.30" height="7.30" fill="rgb(212,212,216)"/><rect x="63.00" y="7.00" width="7.30" height="7.30" fill="rgb(189,185,182)"/><rect x="70.00" y="7.00" width="7.30" height="7.30" fill="rgb(185,180,179)"/><rect x="77.00" y="7.00" width="7.30" height="7.30" fill="rgb(187,187,186)"/><rect x="84.00" y="7.00" width="7.30" height="7.30" fill="rgb(218,221,229)"/></svg><svg class="a" style="left:214.00px;top:433.00px;shape-rendering:crispEdges" width="56" height="14" viewBox="0 0 56 14"><rect x="0.00" y="0.00" width="7.30" height="7.30" fill="rgb(205,207,208)"/><rect x="7.00" y="0.00" width="7.30" height="7.30" fill="rgb(231,230,235)"/><rect x="14.00" y="0.00" width="7.30" height="7.30" fill="rgb(229,230,236)"/><rect x="21.00" y="0.00" width="7.30" height="7.30" fill="rgb(206,202,195)"/><rect x="28.00" y="0.00" width="7.30" height="7.30" fill="rgb(230,225,217)"/><rect x="35.00" y="0.00" width="7.30" height="7.30" fill="rgb(206,209,211)"/><rect x="42.00" y="0.00" width="7.30" height="7.30" fill="rgb(234,234,233)"/><rect x="49.00" y="0.00" width="7.30" height="7.30" fill="rgb(205,201,203)"/><rect x="0.00" y="7.00" width="7.30" height="7.30" fill="rgb(227,223,216)"/><rect x="7.00" y="7.00" width="7.30" height="7.30" fill="rgb(230,231,232)"/><rect x="14.00" y="7.00" width="7.30" height="7.30" fill="rgb(223,223,227)"/><rect x="21.00" y="7.00" width="7.30" height="7.30" fill="rgb(229,224,216)"/><rect x="28.00" y="7.00" width="7.30" height="7.30" fill="rgb(221,224,226)"/><rect x="35.00" y="7.00" width="7.30" height="7.30" fill="rgb(223,223,223)"/><rect x="42.00" y="7.00" width="7.30" height="7.30" fill="rgb(240,236,238)"/><rect x="49.00" y="7.00" width="7.30" height="7.30" fill="rgb(221,226,232)"/></svg><div class="a" style="left:513.00px;top:404.50px;width:25.00px;height:19.00px;background:#198754;border-radius:6px"></div><svg class="a" style="left:519.50px;top:408.00px;" width="12" height="12" viewBox="0 0 12 12"><circle cx="6" cy="6" r="6.2" fill="#fff"/><path d="M6 2.8 V6.2 L8.2 7.8" stroke="#198754" stroke-width="0.8" fill="none" opacity="0.6"/></svg><div class="t " style="left:546.00px;top:405.66px;font-size:16px;line-height:24px;font-weight:700;color:#212529;letter-spacing:0.1px">Wedstrijdtafel</div><div class="t " style="left:546.50px;top:431.85px;font-size:14px;line-height:21px;font-weight:400;color:#6c757d;letter-spacing:-0.45px">Locatie:</div><svg class="a" style="left:596.00px;top:434.80px;shape-rendering:crispEdges" width="130" height="14" viewBox="0 0 130 14"><rect x="0.00" y="0.00" width="7.14" height="7.30" fill="rgb(230,227,229)"/><rect x="6.84" y="0.00" width="7.14" height="7.30" fill="rgb(223,225,232)"/><rect x="13.68" y="0.00" width="7.14" height="7.30" fill="rgb(228,227,231)"/><rect x="20.53" y="0.00" width="7.14" height="7.30" fill="rgb(247,244,246)"/><rect x="27.37" y="0.00" width="7.14" height="7.30" fill="rgb(240,236,234)"/><rect x="34.21" y="0.00" width="7.14" height="7.30" fill="rgb(229,230,234)"/><rect x="41.05" y="0.00" width="7.14" height="7.30" fill="rgb(233,238,241)"/><rect x="47.89" y="0.00" width="7.14" height="7.30" fill="rgb(221,222,220)"/><rect x="54.74" y="0.00" width="7.14" height="7.30" fill="rgb(229,232,237)"/><rect x="61.58" y="0.00" width="7.14" height="7.30" fill="rgb(236,236,240)"/><rect x="68.42" y="0.00" width="7.14" height="7.30" fill="rgb(245,240,235)"/><rect x="75.26" y="0.00" width="7.14" height="7.30" fill="rgb(234,239,248)"/><rect x="82.11" y="0.00" width="7.14" height="7.30" fill="rgb(240,243,250)"/><rect x="88.95" y="0.00" width="7.14" height="7.30" fill="rgb(217,222,225)"/><rect x="95.79" y="0.00" width="7.14" height="7.30" fill="rgb(244,240,234)"/><rect x="102.63" y="0.00" width="7.14" height="7.30" fill="rgb(228,226,221)"/><rect x="109.47" y="0.00" width="7.14" height="7.30" fill="rgb(238,237,236)"/><rect x="116.32" y="0.00" width="7.14" height="7.30" fill="rgb(244,244,242)"/><rect x="123.16" y="0.00" width="7.14" height="7.30" fill="rgb(236,233,229)"/><rect x="0.00" y="7.00" width="7.14" height="7.30" fill="rgb(216,214,216)"/><rect x="6.84" y="7.00" width="7.14" height="7.30" fill="rgb(192,190,185)"/><rect x="13.68" y="7.00" width="7.14" height="7.30" fill="rgb(237,234,228)"/><rect x="20.53" y="7.00" width="7.14" height="7.30" fill="rgb(237,234,236)"/><rect x="27.37" y="7.00" width="7.14" height="7.30" fill="rgb(188,189,195)"/><rect x="34.21" y="7.00" width="7.14" height="7.30" fill="rgb(231,226,218)"/><rect x="41.05" y="7.00" width="7.14" height="7.30" fill="rgb(204,201,196)"/><rect x="47.89" y="7.00" width="7.14" height="7.30" fill="rgb(232,228,227)"/><rect x="54.74" y="7.00" width="7.14" height="7.30" fill="rgb(212,213,214)"/><rect x="61.58" y="7.00" width="7.14" height="7.30" fill="rgb(232,230,234)"/><rect x="68.42" y="7.00" width="7.14" height="7.30" fill="rgb(212,209,203)"/><rect x="75.26" y="7.00" width="7.14" height="7.30" fill="rgb(200,201,207)"/><rect x="82.11" y="7.00" width="7.14" height="7.30" fill="rgb(220,218,216)"/><rect x="88.95" y="7.00" width="7.14" height="7.30" fill="rgb(211,212,214)"/><rect x="95.79" y="7.00" width="7.14" height="7.30" fill="rgb(206,209,217)"/><rect x="102.63" y="7.00" width="7.14" height="7.30" fill="rgb(217,216,214)"/><rect x="109.47" y="7.00" width="7.14" height="7.30" fill="rgb(192,190,185)"/><rect x="116.32" y="7.00" width="7.14" height="7.30" fill="rgb(215,218,224)"/><rect x="123.16" y="7.00" width="7.14" height="7.30" fill="rgb(224,221,223)"/></svg><div class="t " style="left:797.00px;top:405.76px;font-size:16px;line-height:24px;font-weight:400;color:#5a5f64;letter-spacing:0px">—</div><div class="t " style="left:897.00px;top:405.76px;font-size:16px;line-height:24px;font-weight:400;color:#212529;">1</div><div class="t " style="left:1026.00px;top:405.76px;font-size:16px;line-height:24px;font-weight:400;color:#212529;letter-spacing:-0.3px">12 jaar</div><div class="t " style="left:1193.00px;top:405.76px;font-size:16px;line-height:24px;font-weight:400;color:#212529;">-</div><svg class="a" style="left:1393.00px;top:408.50px;" width="17" height="17" viewBox="0 0 17 17"><circle cx="8.5" cy="8.5" r="8.3" fill="#dc3545"/><path d="M8.5 4.8 V9" stroke="#fff" stroke-width="1.6" stroke-linecap="round"/><circle cx="8.5" cy="11.9" r="0.95" fill="#fff"/></svg><div class="a" style="left:1474.00px;top:405.00px;width:379.00px;height:37.60px;background:#fff;border:1px solid #d5d9de;border-radius:6px;box-sizing:border-box"></div><svg class="a" style="left:1826.00px;top:420.50px;" width="12" height="7" viewBox="0 0 12 7"><path d="M1 1 L6 6 L11 1" stroke="#343a40" stroke-width="1.7" fill="none" stroke-linecap="round" stroke-linejoin="round"/></svg><div class="t " style="left:1487.50px;top:412.66px;font-size:16px;line-height:24px;font-weight:400;color:#212529;">- Geen toewijzing -</div><div class="a" style="left:45.00px;top:534.00px;width:1816.00px;height:1.00px;background:#dee2e6"></div><svg class="a" style="left:51.00px;top:477.00px;shape-rendering:crispEdges" width="84" height="21" viewBox="0 0 84 21"><rect x="0.00" y="0.00" width="7.30" height="7.30" fill="rgb(240,235,235)"/><rect x="7.00" y="0.00" width="7.30" height="7.30" fill="rgb(237,240,246)"/><rect x="14.00" y="0.00" width="7.30" height="7.30" fill="rgb(225,225,229)"/><rect x="21.00" y="0.00" width="7.30" height="7.30" fill="rgb(233,231,235)"/><rect x="28.00" y="0.00" width="7.30" height="7.30" fill="rgb(225,230,241)"/><rect x="35.00" y="0.00" width="7.30" height="7.30" fill="rgb(230,228,228)"/><rect x="42.00" y="0.00" width="7.30" height="7.30" fill="rgb(226,228,227)"/><rect x="49.00" y="0.00" width="7.30" height="7.30" fill="rgb(236,238,238)"/><rect x="56.00" y="0.00" width="7.30" height="7.30" fill="rgb(236,236,239)"/><rect x="63.00" y="0.00" width="7.30" height="7.30" fill="rgb(239,243,244)"/><rect x="70.00" y="0.00" width="7.30" height="7.30" fill="rgb(251,246,246)"/><rect x="77.00" y="0.00" width="7.30" height="7.30" fill="rgb(231,230,233)"/><rect x="0.00" y="7.00" width="7.30" height="7.30" fill="rgb(182,181,179)"/><rect x="7.00" y="7.00" width="7.30" height="7.30" fill="rgb(211,207,208)"/><rect x="14.00" y="7.00" width="7.30" height="7.30" fill="rgb(179,184,194)"/><rect x="21.00" y="7.00" width="7.30" height="7.30" fill="rgb(181,185,192)"/><rect x="28.00" y="7.00" width="7.30" height="7.30" fill="rgb(216,211,212)"/><rect x="35.00" y="7.00" width="7.30" height="7.30" fill="rgb(207,203,202)"/><rect x="42.00" y="7.00" width="7.30" height="7.30" fill="rgb(212,207,200)"/><rect x="49.00" y="7.00" width="7.30" height="7.30" fill="rgb(238,233,229)"/><rect x="56.00" y="7.00" width="7.30" height="7.30" fill="rgb(196,196,199)"/><rect x="63.00" y="7.00" width="7.30" height="7.30" fill="rgb(211,215,220)"/><rect x="70.00" y="7.00" width="7.30" height="7.30" fill="rgb(189,189,191)"/><rect x="77.00" y="7.00" width="7.30" height="7.30" fill="rgb(208,205,201)"/><rect x="0.00" y="14.00" width="7.30" height="7.30" fill="rgb(221,220,216)"/><rect x="7.00" y="14.00" width="7.30" height="7.30" fill="rgb(230,232,237)"/><rect x="14.00" y="14.00" width="7.30" height="7.30" fill="rgb(219,221,229)"/><rect x="21.00" y="14.00" width="7.30" height="7.30" fill="rgb(225,222,219)"/><rect x="28.00" y="14.00" width="7.30" height="7.30" fill="rgb(223,224,222)"/><rect x="35.00" y="14.00" width="7.30" height="7.30" fill="rgb(232,230,230)"/><rect x="42.00" y="14.00" width="7.30" height="7.30" fill="rgb(230,235,245)"/><rect x="49.00" y="14.00" width="7.30" height="7.30" fill="rgb(229,231,235)"/><rect x="56.00" y="14.00" width="7.30" height="7.30" fill="rgb(229,227,229)"/><rect x="63.00" y="14.00" width="7.30" height="7.30" fill="rgb(222,225,232)"/><rect x="70.00" y="14.00" width="7.30" height="7.30" fill="rgb(243,243,242)"/><rect x="77.00" y="14.00" width="7.30" height="7.30" fill="rgb(222,224,232)"/></svg><svg class="a" style="left:51.00px;top:505.00px;shape-rendering:crispEdges" width="35" height="14" viewBox="0 0 35 14"><rect x="0.00" y="0.00" width="7.30" height="7.30" fill="rgb(227,230,233)"/><rect x="7.00" y="0.00" width="7.30" height="7.30" fill="rgb(197,195,192)"/><rect x="14.00" y="0.00" width="7.30" height="7.30" fill="rgb(225,220,217)"/><rect x="21.00" y="0.00" width="7.30" height="7.30" fill="rgb(220,224,228)"/><rect x="28.00" y="0.00" width="7.30" height="7.30" fill="rgb(199,204,211)"/><rect x="0.00" y="7.00" width="7.30" height="7.30" fill="rgb(242,245,253)"/><rect x="7.00" y="7.00" width="7.30" height="7.30" fill="rgb(239,238,234)"/><rect x="14.00" y="7.00" width="7.30" height="7.30" fill="rgb(230,235,246)"/><rect x="21.00" y="7.00" width="7.30" height="7.30" fill="rgb(229,228,227)"/><rect x="28.00" y="7.00" width="7.30" height="7.30" fill="rgb(222,226,236)"/></svg><div class="a" style="left:213.00px;top:487.00px;width:16.00px;height:1.20px;background:#5a5f64"></div><div class="a" style="left:513.00px;top:473.50px;width:25.00px;height:19.00px;background:#fe6606;border-radius:6px"></div><svg class="a" style="left:517.80px;top:477.60px;" width="15" height="12" viewBox="0 0 15 12"><path d="M0 1 A1 1 0 0 1 1 0 H9.8 A1 1 0 0 1 10.8 1 V3 H12.6 L15 5.6 V9.6 H0.4 Z" fill="#fff"/><circle cx="4" cy="9.8" r="2.1" fill="#fff"/><circle cx="11" cy="9.8" r="2.1" fill="#fff"/><circle cx="4" cy="9.8" r="0.8" fill="#fe6606"/><circle cx="11" cy="9.8" r="0.8" fill="#fe6606"/><path d="M11.2 4.2 H12.3 L13.7 5.8 H11.2 Z" fill="#fe6606"/></svg><div class="t " style="left:546.00px;top:474.66px;font-size:16px;line-height:24px;font-weight:700;color:#212529;letter-spacing:0px">Oud-papier ophalen</div><div class="t " style="left:546.50px;top:500.85px;font-size:14px;line-height:21px;font-weight:400;color:#6c757d;letter-spacing:-0.45px">Locatie:</div><svg class="a" style="left:596.00px;top:503.80px;shape-rendering:crispEdges" width="130" height="14" viewBox="0 0 130 14"><rect x="0.00" y="0.00" width="7.14" height="7.30" fill="rgb(239,244,254)"/><rect x="6.84" y="0.00" width="7.14" height="7.30" fill="rgb(233,233,236)"/><rect x="13.68" y="0.00" width="7.14" height="7.30" fill="rgb(219,222,224)"/><rect x="20.53" y="0.00" width="7.14" height="7.30" fill="rgb(245,244,242)"/><rect x="27.37" y="0.00" width="7.14" height="7.30" fill="rgb(246,244,239)"/><rect x="34.21" y="0.00" width="7.14" height="7.30" fill="rgb(223,222,225)"/><rect x="41.05" y="0.00" width="7.14" height="7.30" fill="rgb(218,222,225)"/><rect x="47.89" y="0.00" width="7.14" height="7.30" fill="rgb(223,225,228)"/><rect x="54.74" y="0.00" width="7.14" height="7.30" fill="rgb(235,233,234)"/><rect x="61.58" y="0.00" width="7.14" height="7.30" fill="rgb(219,224,235)"/><rect x="68.42" y="0.00" width="7.14" height="7.30" fill="rgb(238,242,252)"/><rect x="75.26" y="0.00" width="7.14" height="7.30" fill="rgb(231,231,236)"/><rect x="82.11" y="0.00" width="7.14" height="7.30" fill="rgb(226,225,229)"/><rect x="88.95" y="0.00" width="7.14" height="7.30" fill="rgb(234,237,241)"/><rect x="95.79" y="0.00" width="7.14" height="7.30" fill="rgb(221,224,230)"/><rect x="102.63" y="0.00" width="7.14" height="7.30" fill="rgb(245,240,238)"/><rect x="109.47" y="0.00" width="7.14" height="7.30" fill="rgb(233,235,234)"/><rect x="116.32" y="0.00" width="7.14" height="7.30" fill="rgb(229,226,227)"/><rect x="123.16" y="0.00" width="7.14" height="7.30" fill="rgb(229,232,233)"/><rect x="0.00" y="7.00" width="7.14" height="7.30" fill="rgb(219,223,226)"/><rect x="6.84" y="7.00" width="7.14" height="7.30" fill="rgb(214,216,219)"/><rect x="13.68" y="7.00" width="7.14" height="7.30" fill="rgb(199,195,194)"/><rect x="20.53" y="7.00" width="7.14" height="7.30" fill="rgb(185,188,191)"/><rect x="27.37" y="7.00" width="7.14" height="7.30" fill="rgb(190,192,200)"/><rect x="34.21" y="7.00" width="7.14" height="7.30" fill="rgb(204,207,210)"/><rect x="41.05" y="7.00" width="7.14" height="7.30" fill="rgb(216,211,209)"/><rect x="47.89" y="7.00" width="7.14" height="7.30" fill="rgb(216,211,206)"/><rect x="54.74" y="7.00" width="7.14" height="7.30" fill="rgb(193,188,182)"/><rect x="61.58" y="7.00" width="7.14" height="7.30" fill="rgb(191,187,180)"/><rect x="68.42" y="7.00" width="7.14" height="7.30" fill="rgb(199,203,210)"/><rect x="75.26" y="7.00" width="7.14" height="7.30" fill="rgb(190,187,183)"/><rect x="82.11" y="7.00" width="7.14" height="7.30" fill="rgb(194,190,189)"/><rect x="88.95" y="7.00" width="7.14" height="7.30" fill="rgb(215,210,202)"/><rect x="95.79" y="7.00" width="7.14" height="7.30" fill="rgb(194,192,187)"/><rect x="102.63" y="7.00" width="7.14" height="7.30" fill="rgb(191,194,196)"/><rect x="109.47" y="7.00" width="7.14" height="7.30" fill="rgb(190,192,196)"/><rect x="116.32" y="7.00" width="7.14" height="7.30" fill="rgb(217,217,218)"/><rect x="123.16" y="7.00" width="7.14" height="7.30" fill="rgb(191,194,195)"/></svg><div class="t " style="left:797.00px;top:474.76px;font-size:16px;line-height:24px;font-weight:400;color:#212529;letter-spacing:0.4px">± 3 uur</div><div class="t " style="left:897.00px;top:474.76px;font-size:16px;line-height:24px;font-weight:400;color:#212529;">2</div><div class="t " style="left:1026.00px;top:474.76px;font-size:16px;line-height:24px;font-weight:400;color:#212529;letter-spacing:-0.3px">18 jaar</div><div class="t " style="left:1193.00px;top:474.76px;font-size:16px;line-height:24px;font-weight:400;color:#212529;">-</div><svg class="a" style="left:1394.00px;top:480.00px;" width="16" height="13" viewBox="0 0 16 13"><path d="M1.4 7.7 L5.8 11.6 L14 1.2" stroke="#198754" stroke-width="2.2" fill="none" stroke-linecap="round" stroke-linejoin="round"/></svg><div class="a" style="left:1474.00px;top:474.00px;width:379.00px;height:37.60px;background:#fff;border:1px solid #d5d9de;border-radius:6px;box-sizing:border-box"></div><svg class="a" style="left:1826.00px;top:489.50px;" width="12" height="7" viewBox="0 0 12 7"><path d="M1 1 L6 6 L11 1" stroke="#343a40" stroke-width="1.7" fill="none" stroke-linecap="round" stroke-linejoin="round"/></svg><svg class="a" style="left:1486.00px;top:482.50px;shape-rendering:crispEdges" width="124" height="21" viewBox="0 0 124 21"><rect x="0.00" y="0.00" width="7.19" height="7.30" fill="rgb(241,237,232)"/><rect x="6.89" y="0.00" width="7.19" height="7.30" fill="rgb(238,236,238)"/><rect x="13.78" y="0.00" width="7.19" height="7.30" fill="rgb(242,247,250)"/><rect x="20.67" y="0.00" width="7.19" height="7.30" fill="rgb(240,243,245)"/><rect x="27.56" y="0.00" width="7.19" height="7.30" fill="rgb(237,239,238)"/><rect x="34.44" y="0.00" width="7.19" height="7.30" fill="rgb(236,239,241)"/><rect x="41.33" y="0.00" width="7.19" height="7.30" fill="rgb(242,237,231)"/><rect x="48.22" y="0.00" width="7.19" height="7.30" fill="rgb(244,241,244)"/><rect x="55.11" y="0.00" width="7.19" height="7.30" fill="rgb(236,232,226)"/><rect x="62.00" y="0.00" width="7.19" height="7.30" fill="rgb(246,249,249)"/><rect x="68.89" y="0.00" width="7.19" height="7.30" fill="rgb(247,249,252)"/><rect x="75.78" y="0.00" width="7.19" height="7.30" fill="rgb(249,246,244)"/><rect x="82.67" y="0.00" width="7.19" height="7.30" fill="rgb(231,233,234)"/><rect x="89.56" y="0.00" width="7.19" height="7.30" fill="rgb(243,244,245)"/><rect x="96.44" y="0.00" width="7.19" height="7.30" fill="rgb(243,245,253)"/><rect x="103.33" y="0.00" width="7.19" height="7.30" fill="rgb(239,243,252)"/><rect x="110.22" y="0.00" width="7.19" height="7.30" fill="rgb(239,237,237)"/><rect x="117.11" y="0.00" width="7.19" height="7.30" fill="rgb(241,238,233)"/><rect x="0.00" y="7.00" width="7.19" height="7.30" fill="rgb(155,152,147)"/><rect x="6.89" y="7.00" width="7.19" height="7.30" fill="rgb(157,156,157)"/><rect x="13.78" y="7.00" width="7.19" height="7.30" fill="rgb(193,192,194)"/><rect x="20.67" y="7.00" width="7.19" height="7.30" fill="rgb(187,190,195)"/><rect x="27.56" y="7.00" width="7.19" height="7.30" fill="rgb(205,203,199)"/><rect x="34.44" y="7.00" width="7.19" height="7.30" fill="rgb(192,188,187)"/><rect x="41.33" y="7.00" width="7.19" height="7.30" fill="rgb(150,151,157)"/><rect x="48.22" y="7.00" width="7.19" height="7.30" fill="rgb(157,159,164)"/><rect x="55.11" y="7.00" width="7.19" height="7.30" fill="rgb(194,191,191)"/><rect x="62.00" y="7.00" width="7.19" height="7.30" fill="rgb(155,153,148)"/><rect x="68.89" y="7.00" width="7.19" height="7.30" fill="rgb(177,181,182)"/><rect x="75.78" y="7.00" width="7.19" height="7.30" fill="rgb(198,193,188)"/><rect x="82.67" y="7.00" width="7.19" height="7.30" fill="rgb(213,216,221)"/><rect x="89.56" y="7.00" width="7.19" height="7.30" fill="rgb(202,200,197)"/><rect x="96.44" y="7.00" width="7.19" height="7.30" fill="rgb(198,200,208)"/><rect x="103.33" y="7.00" width="7.19" height="7.30" fill="rgb(221,219,219)"/><rect x="110.22" y="7.00" width="7.19" height="7.30" fill="rgb(212,214,213)"/><rect x="117.11" y="7.00" width="7.19" height="7.30" fill="rgb(173,174,179)"/><rect x="0.00" y="14.00" width="7.19" height="7.30" fill="rgb(230,234,238)"/><rect x="6.89" y="14.00" width="7.19" height="7.30" fill="rgb(218,220,227)"/><rect x="13.78" y="14.00" width="7.19" height="7.30" fill="rgb(233,228,222)"/><rect x="20.67" y="14.00" width="7.19" height="7.30" fill="rgb(239,239,240)"/><rect x="27.56" y="14.00" width="7.19" height="7.30" fill="rgb(235,240,244)"/><rect x="34.44" y="14.00" width="7.19" height="7.30" fill="rgb(239,237,235)"/><rect x="41.33" y="14.00" width="7.19" height="7.30" fill="rgb(225,227,234)"/><rect x="48.22" y="14.00" width="7.19" height="7.30" fill="rgb(220,215,209)"/><rect x="55.11" y="14.00" width="7.19" height="7.30" fill="rgb(214,219,229)"/><rect x="62.00" y="14.00" width="7.19" height="7.30" fill="rgb(221,225,229)"/><rect x="68.89" y="14.00" width="7.19" height="7.30" fill="rgb(231,228,225)"/><rect x="75.78" y="14.00" width="7.19" height="7.30" fill="rgb(228,224,223)"/><rect x="82.67" y="14.00" width="7.19" height="7.30" fill="rgb(231,228,230)"/><rect x="89.56" y="14.00" width="7.19" height="7.30" fill="rgb(220,221,221)"/><rect x="96.44" y="14.00" width="7.19" height="7.30" fill="rgb(229,229,233)"/><rect x="103.33" y="14.00" width="7.19" height="7.30" fill="rgb(225,224,222)"/><rect x="110.22" y="14.00" width="7.19" height="7.30" fill="rgb(233,229,222)"/><rect x="117.11" y="14.00" width="7.19" height="7.30" fill="rgb(224,223,221)"/></svg><div class="t " style="left:1615.00px;top:484.85px;font-size:14px;line-height:21px;font-weight:400;color:#6c757d;letter-spacing:-0.3px">(19 jr)</div><div class="a" style="left:45.00px;top:603.00px;width:1816.00px;height:1.00px;background:#dee2e6"></div><svg class="a" style="left:51.00px;top:549.00px;shape-rendering:crispEdges" width="84" height="14" viewBox="0 0 84 14"><rect x="0.00" y="0.00" width="7.30" height="7.30" fill="rgb(220,215,209)"/><rect x="7.00" y="0.00" width="7.30" height="7.30" fill="rgb(236,231,225)"/><rect x="14.00" y="0.00" width="7.30" height="7.30" fill="rgb(244,239,233)"/><rect x="21.00" y="0.00" width="7.30" height="7.30" fill="rgb(213,210,207)"/><rect x="28.00" y="0.00" width="7.30" height="7.30" fill="rgb(229,234,242)"/><rect x="35.00" y="0.00" width="7.30" height="7.30" fill="rgb(215,210,211)"/><rect x="42.00" y="0.00" width="7.30" height="7.30" fill="rgb(243,244,244)"/><rect x="49.00" y="0.00" width="7.30" height="7.30" fill="rgb(207,208,213)"/><rect x="56.00" y="0.00" width="7.30" height="7.30" fill="rgb(231,234,238)"/><rect x="63.00" y="0.00" width="7.30" height="7.30" fill="rgb(217,219,225)"/><rect x="70.00" y="0.00" width="7.30" height="7.30" fill="rgb(243,240,243)"/><rect x="77.00" y="0.00" width="7.30" height="7.30" fill="rgb(249,244,241)"/><rect x="0.00" y="7.00" width="7.30" height="7.30" fill="rgb(234,229,226)"/><rect x="7.00" y="7.00" width="7.30" height="7.30" fill="rgb(211,211,217)"/><rect x="14.00" y="7.00" width="7.30" height="7.30" fill="rgb(221,222,227)"/><rect x="21.00" y="7.00" width="7.30" height="7.30" fill="rgb(200,203,210)"/><rect x="28.00" y="7.00" width="7.30" height="7.30" fill="rgb(214,212,215)"/><rect x="35.00" y="7.00" width="7.30" height="7.30" fill="rgb(171,173,174)"/><rect x="42.00" y="7.00" width="7.30" height="7.30" fill="rgb(199,200,203)"/><rect x="49.00" y="7.00" width="7.30" height="7.30" fill="rgb(199,195,192)"/><rect x="56.00" y="7.00" width="7.30" height="7.30" fill="rgb(187,190,199)"/><rect x="63.00" y="7.00" width="7.30" height="7.30" fill="rgb(196,198,206)"/><rect x="70.00" y="7.00" width="7.30" height="7.30" fill="rgb(176,178,182)"/><rect x="77.00" y="7.00" width="7.30" height="7.30" fill="rgb(171,170,173)"/></svg><svg class="a" style="left:51.00px;top:569.00px;shape-rendering:crispEdges" width="35" height="21" viewBox="0 0 35 21"><rect x="0.00" y="0.00" width="7.30" height="7.30" fill="rgb(247,248,247)"/><rect x="7.00" y="0.00" width="7.30" height="7.30" fill="rgb(231,232,236)"/><rect x="14.00" y="0.00" width="7.30" height="7.30" fill="rgb(238,238,237)"/><rect x="21.00" y="0.00" width="7.30" height="7.30" fill="rgb(244,245,250)"/><rect x="28.00" y="0.00" width="7.30" height="7.30" fill="rgb(236,232,232)"/><rect x="0.00" y="7.00" width="7.30" height="7.30" fill="rgb(221,225,227)"/><rect x="7.00" y="7.00" width="7.30" height="7.30" fill="rgb(231,229,230)"/><rect x="14.00" y="7.00" width="7.30" height="7.30" fill="rgb(190,185,183)"/><rect x="21.00" y="7.00" width="7.30" height="7.30" fill="rgb(196,201,206)"/><rect x="28.00" y="7.00" width="7.30" height="7.30" fill="rgb(224,220,218)"/><rect x="0.00" y="14.00" width="7.30" height="7.30" fill="rgb(245,241,237)"/><rect x="7.00" y="14.00" width="7.30" height="7.30" fill="rgb(247,247,253)"/><rect x="14.00" y="14.00" width="7.30" height="7.30" fill="rgb(243,243,249)"/><rect x="21.00" y="14.00" width="7.30" height="7.30" fill="rgb(233,233,239)"/><rect x="28.00" y="14.00" width="7.30" height="7.30" fill="rgb(231,229,226)"/></svg><div class="a" style="left:213.00px;top:556.00px;width:16.00px;height:1.20px;background:#5a5f64"></div><div class="a" style="left:513.00px;top:542.50px;width:25.00px;height:19.00px;background:#fe6606;border-radius:6px"></div><svg class="a" style="left:517.80px;top:546.60px;" width="15" height="12" viewBox="0 0 15 12"><path d="M0 1 A1 1 0 0 1 1 0 H9.8 A1 1 0 0 1 10.8 1 V3 H12.6 L15 5.6 V9.6 H0.4 Z" fill="#fff"/><circle cx="4" cy="9.8" r="2.1" fill="#fff"/><circle cx="11" cy="9.8" r="2.1" fill="#fff"/><circle cx="4" cy="9.8" r="0.8" fill="#fe6606"/><circle cx="11" cy="9.8" r="0.8" fill="#fe6606"/><path d="M11.2 4.2 H12.3 L13.7 5.8 H11.2 Z" fill="#fe6606"/></svg><div class="t " style="left:546.00px;top:543.66px;font-size:16px;line-height:24px;font-weight:700;color:#212529;letter-spacing:0px">Oud-papier ophalen</div><div class="t " style="left:546.50px;top:569.85px;font-size:14px;line-height:21px;font-weight:400;color:#6c757d;letter-spacing:-0.45px">Locatie:</div><svg class="a" style="left:596.00px;top:572.80px;shape-rendering:crispEdges" width="131" height="14" viewBox="0 0 131 14"><rect x="0.00" y="0.00" width="7.19" height="7.30" fill="rgb(234,236,242)"/><rect x="6.89" y="0.00" width="7.19" height="7.30" fill="rgb(235,233,236)"/><rect x="13.79" y="0.00" width="7.19" height="7.30" fill="rgb(232,230,225)"/><rect x="20.68" y="0.00" width="7.19" height="7.30" fill="rgb(236,241,245)"/><rect x="27.58" y="0.00" width="7.19" height="7.30" fill="rgb(244,244,243)"/><rect x="34.47" y="0.00" width="7.19" height="7.30" fill="rgb(223,228,232)"/><rect x="41.37" y="0.00" width="7.19" height="7.30" fill="rgb(221,223,229)"/><rect x="48.26" y="0.00" width="7.19" height="7.30" fill="rgb(223,226,228)"/><rect x="55.16" y="0.00" width="7.19" height="7.30" fill="rgb(235,230,227)"/><rect x="62.05" y="0.00" width="7.19" height="7.30" fill="rgb(234,233,229)"/><rect x="68.95" y="0.00" width="7.19" height="7.30" fill="rgb(226,229,230)"/><rect x="75.84" y="0.00" width="7.19" height="7.30" fill="rgb(243,240,240)"/><rect x="82.74" y="0.00" width="7.19" height="7.30" fill="rgb(228,230,231)"/><rect x="89.63" y="0.00" width="7.19" height="7.30" fill="rgb(241,239,241)"/><rect x="96.53" y="0.00" width="7.19" height="7.30" fill="rgb(227,227,233)"/><rect x="103.42" y="0.00" width="7.19" height="7.30" fill="rgb(242,244,245)"/><rect x="110.32" y="0.00" width="7.19" height="7.30" fill="rgb(228,223,216)"/><rect x="117.21" y="0.00" width="7.19" height="7.30" fill="rgb(235,240,249)"/><rect x="124.11" y="0.00" width="7.19" height="7.30" fill="rgb(246,243,242)"/><rect x="0.00" y="7.00" width="7.19" height="7.30" fill="rgb(192,197,205)"/><rect x="6.89" y="7.00" width="7.19" height="7.30" fill="rgb(202,205,208)"/><rect x="13.79" y="7.00" width="7.19" height="7.30" fill="rgb(234,234,236)"/><rect x="20.68" y="7.00" width="7.19" height="7.30" fill="rgb(219,217,215)"/><rect x="27.58" y="7.00" width="7.19" height="7.30" fill="rgb(211,211,210)"/><rect x="34.47" y="7.00" width="7.19" height="7.30" fill="rgb(213,209,206)"/><rect x="41.37" y="7.00" width="7.19" height="7.30" fill="rgb(194,189,187)"/><rect x="48.26" y="7.00" width="7.19" height="7.30" fill="rgb(189,188,185)"/><rect x="55.16" y="7.00" width="7.19" height="7.30" fill="rgb(204,199,197)"/><rect x="62.05" y="7.00" width="7.19" height="7.30" fill="rgb(198,196,200)"/><rect x="68.95" y="7.00" width="7.19" height="7.30" fill="rgb(195,196,197)"/><rect x="75.84" y="7.00" width="7.19" height="7.30" fill="rgb(198,194,194)"/><rect x="82.74" y="7.00" width="7.19" height="7.30" fill="rgb(207,209,210)"/><rect x="89.63" y="7.00" width="7.19" height="7.30" fill="rgb(229,226,225)"/><rect x="96.53" y="7.00" width="7.19" height="7.30" fill="rgb(188,191,195)"/><rect x="103.42" y="7.00" width="7.19" height="7.30" fill="rgb(232,232,235)"/><rect x="110.32" y="7.00" width="7.19" height="7.30" fill="rgb(224,229,234)"/><rect x="117.21" y="7.00" width="7.19" height="7.30" fill="rgb(225,229,238)"/><rect x="124.11" y="7.00" width="7.19" height="7.30" fill="rgb(223,223,224)"/></svg><div class="t " style="left:797.00px;top:543.76px;font-size:16px;line-height:24px;font-weight:400;color:#212529;letter-spacing:0.4px">± 3 uur</div><div class="t " style="left:897.00px;top:543.76px;font-size:16px;line-height:24px;font-weight:400;color:#212529;">2</div><div class="t " style="left:1026.00px;top:543.76px;font-size:16px;line-height:24px;font-weight:400;color:#212529;letter-spacing:-0.3px">18 jaar</div><div class="t " style="left:1193.00px;top:543.76px;font-size:16px;line-height:24px;font-weight:400;color:#212529;">-</div><svg class="a" style="left:1394.00px;top:549.00px;" width="16" height="13" viewBox="0 0 16 13"><path d="M1.4 7.7 L5.8 11.6 L14 1.2" stroke="#198754" stroke-width="2.2" fill="none" stroke-linecap="round" stroke-linejoin="round"/></svg><div class="a" style="left:1474.00px;top:543.00px;width:379.00px;height:37.60px;background:#fff;border:1px solid #d5d9de;border-radius:6px;box-sizing:border-box"></div><svg class="a" style="left:1826.00px;top:558.50px;" width="12" height="7" viewBox="0 0 12 7"><path d="M1 1 L6 6 L11 1" stroke="#343a40" stroke-width="1.7" fill="none" stroke-linecap="round" stroke-linejoin="round"/></svg><svg class="a" style="left:1484.00px;top:552.00px;shape-rendering:crispEdges" width="137" height="21" viewBox="0 0 137 21"><rect x="0.00" y="0.00" width="7.15" height="7.30" fill="rgb(243,240,237)"/><rect x="6.85" y="0.00" width="7.15" height="7.30" fill="rgb(246,246,247)"/><rect x="13.70" y="0.00" width="7.15" height="7.30" fill="rgb(232,237,246)"/><rect x="20.55" y="0.00" width="7.15" height="7.30" fill="rgb(234,238,245)"/><rect x="27.40" y="0.00" width="7.15" height="7.30" fill="rgb(237,240,245)"/><rect x="34.25" y="0.00" width="7.15" height="7.30" fill="rgb(246,243,238)"/><rect x="41.10" y="0.00" width="7.15" height="7.30" fill="rgb(243,243,240)"/><rect x="47.95" y="0.00" width="7.15" height="7.30" fill="rgb(236,239,241)"/><rect x="54.80" y="0.00" width="7.15" height="7.30" fill="rgb(244,245,247)"/><rect x="61.65" y="0.00" width="7.15" height="7.30" fill="rgb(245,245,249)"/><rect x="68.50" y="0.00" width="7.15" height="7.30" fill="rgb(253,249,247)"/><rect x="75.35" y="0.00" width="7.15" height="7.30" fill="rgb(250,245,239)"/><rect x="82.20" y="0.00" width="7.15" height="7.30" fill="rgb(250,246,243)"/><rect x="89.05" y="0.00" width="7.15" height="7.30" fill="rgb(237,239,240)"/><rect x="95.90" y="0.00" width="7.15" height="7.30" fill="rgb(238,235,234)"/><rect x="102.75" y="0.00" width="7.15" height="7.30" fill="rgb(243,240,240)"/><rect x="109.60" y="0.00" width="7.15" height="7.30" fill="rgb(232,233,231)"/><rect x="116.45" y="0.00" width="7.15" height="7.30" fill="rgb(235,239,247)"/><rect x="123.30" y="0.00" width="7.15" height="7.30" fill="rgb(234,238,245)"/><rect x="130.15" y="0.00" width="7.15" height="7.30" fill="rgb(239,235,233)"/><rect x="0.00" y="7.00" width="7.15" height="7.30" fill="rgb(191,196,205)"/><rect x="6.85" y="7.00" width="7.15" height="7.30" fill="rgb(171,170,169)"/><rect x="13.70" y="7.00" width="7.15" height="7.30" fill="rgb(161,160,163)"/><rect x="20.55" y="7.00" width="7.15" height="7.30" fill="rgb(162,157,153)"/><rect x="27.40" y="7.00" width="7.15" height="7.30" fill="rgb(203,198,196)"/><rect x="34.25" y="7.00" width="7.15" height="7.30" fill="rgb(152,152,152)"/><rect x="41.10" y="7.00" width="7.15" height="7.30" fill="rgb(201,204,212)"/><rect x="47.95" y="7.00" width="7.15" height="7.30" fill="rgb(186,184,180)"/><rect x="54.80" y="7.00" width="7.15" height="7.30" fill="rgb(213,215,216)"/><rect x="61.65" y="7.00" width="7.15" height="7.30" fill="rgb(154,159,167)"/><rect x="68.50" y="7.00" width="7.15" height="7.30" fill="rgb(165,167,170)"/><rect x="75.35" y="7.00" width="7.15" height="7.30" fill="rgb(217,213,213)"/><rect x="82.20" y="7.00" width="7.15" height="7.30" fill="rgb(182,180,176)"/><rect x="89.05" y="7.00" width="7.15" height="7.30" fill="rgb(167,169,170)"/><rect x="95.90" y="7.00" width="7.15" height="7.30" fill="rgb(158,157,160)"/><rect x="102.75" y="7.00" width="7.15" height="7.30" fill="rgb(158,161,170)"/><rect x="109.60" y="7.00" width="7.15" height="7.30" fill="rgb(174,170,165)"/><rect x="116.45" y="7.00" width="7.15" height="7.30" fill="rgb(156,160,163)"/><rect x="123.30" y="7.00" width="7.15" height="7.30" fill="rgb(158,162,169)"/><rect x="130.15" y="7.00" width="7.15" height="7.30" fill="rgb(168,170,175)"/><rect x="0.00" y="14.00" width="7.15" height="7.30" fill="rgb(230,225,226)"/><rect x="6.85" y="14.00" width="7.15" height="7.30" fill="rgb(226,223,218)"/><rect x="13.70" y="14.00" width="7.15" height="7.30" fill="rgb(231,234,242)"/><rect x="20.55" y="14.00" width="7.15" height="7.30" fill="rgb(233,231,229)"/><rect x="27.40" y="14.00" width="7.15" height="7.30" fill="rgb(232,227,228)"/><rect x="34.25" y="14.00" width="7.15" height="7.30" fill="rgb(225,230,239)"/><rect x="41.10" y="14.00" width="7.15" height="7.30" fill="rgb(224,222,222)"/><rect x="47.95" y="14.00" width="7.15" height="7.30" fill="rgb(240,235,235)"/><rect x="54.80" y="14.00" width="7.15" height="7.30" fill="rgb(222,220,219)"/><rect x="61.65" y="14.00" width="7.15" height="7.30" fill="rgb(243,240,238)"/><rect x="68.50" y="14.00" width="7.15" height="7.30" fill="rgb(235,231,226)"/><rect x="75.35" y="14.00" width="7.15" height="7.30" fill="rgb(229,230,230)"/><rect x="82.20" y="14.00" width="7.15" height="7.30" fill="rgb(229,232,236)"/><rect x="89.05" y="14.00" width="7.15" height="7.30" fill="rgb(241,240,237)"/><rect x="95.90" y="14.00" width="7.15" height="7.30" fill="rgb(213,216,223)"/><rect x="102.75" y="14.00" width="7.15" height="7.30" fill="rgb(234,232,228)"/><rect x="109.60" y="14.00" width="7.15" height="7.30" fill="rgb(232,228,226)"/><rect x="116.45" y="14.00" width="7.15" height="7.30" fill="rgb(216,215,219)"/><rect x="123.30" y="14.00" width="7.15" height="7.30" fill="rgb(224,226,228)"/><rect x="130.15" y="14.00" width="7.15" height="7.30" fill="rgb(225,223,220)"/></svg><div class="a" style="left:1627.00px;top:555.00px;width:23.00px;height:15.00px;background:#ff5a00;border-radius:6px"></div><svg class="a" style="left:1632.50px;top:556.20px;" width="12" height="12" viewBox="0 0 12 12"><polygon points="6.00,0.40 7.70,4.05 11.71,4.55 8.76,7.30 9.53,11.25 6.00,9.30 2.47,11.25 3.24,7.30 0.29,4.55 4.30,4.05" fill="#fff" stroke="#fff" stroke-width="1" stroke-linejoin="round"/></svg><div class="t " style="left:1654.50px;top:553.85px;font-size:14px;line-height:21px;font-weight:400;color:#6c757d;letter-spacing:-0.3px">(23 jr)</div><div class="a" style="left:45.00px;top:672.00px;width:1816.00px;height:1.00px;background:#dee2e6"></div><svg class="a" style="left:49.00px;top:617.00px;shape-rendering:crispEdges" width="91" height="14" viewBox="0 0 91 14"><rect x="0.00" y="0.00" width="7.30" height="7.30" fill="rgb(214,209,209)"/><rect x="7.00" y="0.00" width="7.30" height="7.30" fill="rgb(241,242,244)"/><rect x="14.00" y="0.00" width="7.30" height="7.30" fill="rgb(212,216,224)"/><rect x="21.00" y="0.00" width="7.30" height="7.30" fill="rgb(222,217,215)"/><rect x="28.00" y="0.00" width="7.30" height="7.30" fill="rgb(216,220,225)"/><rect x="35.00" y="0.00" width="7.30" height="7.30" fill="rgb(213,213,215)"/><rect x="42.00" y="0.00" width="7.30" height="7.30" fill="rgb(237,237,242)"/><rect x="49.00" y="0.00" width="7.30" height="7.30" fill="rgb(213,210,208)"/><rect x="56.00" y="0.00" width="7.30" height="7.30" fill="rgb(216,211,204)"/><rect x="63.00" y="0.00" width="7.30" height="7.30" fill="rgb(209,209,206)"/><rect x="70.00" y="0.00" width="7.30" height="7.30" fill="rgb(206,208,213)"/><rect x="77.00" y="0.00" width="7.30" height="7.30" fill="rgb(223,221,225)"/><rect x="84.00" y="0.00" width="7.30" height="7.30" fill="rgb(213,208,201)"/><rect x="0.00" y="7.00" width="7.30" height="7.30" fill="rgb(210,205,202)"/><rect x="7.00" y="7.00" width="7.30" height="7.30" fill="rgb(170,174,182)"/><rect x="14.00" y="7.00" width="7.30" height="7.30" fill="rgb(198,200,203)"/><rect x="21.00" y="7.00" width="7.30" height="7.30" fill="rgb(193,195,201)"/><rect x="28.00" y="7.00" width="7.30" height="7.30" fill="rgb(225,222,220)"/><rect x="35.00" y="7.00" width="7.30" height="7.30" fill="rgb(163,167,172)"/><rect x="42.00" y="7.00" width="7.30" height="7.30" fill="rgb(176,181,185)"/><rect x="49.00" y="7.00" width="7.30" height="7.30" fill="rgb(213,217,226)"/><rect x="56.00" y="7.00" width="7.30" height="7.30" fill="rgb(206,205,208)"/><rect x="63.00" y="7.00" width="7.30" height="7.30" fill="rgb(232,235,243)"/><rect x="70.00" y="7.00" width="7.30" height="7.30" fill="rgb(189,190,195)"/><rect x="77.00" y="7.00" width="7.30" height="7.30" fill="rgb(196,195,200)"/><rect x="84.00" y="7.00" width="7.30" height="7.30" fill="rgb(223,224,229)"/></svg><svg class="a" style="left:49.00px;top:638.00px;shape-rendering:crispEdges" width="42" height="21" viewBox="0 0 42 21"><rect x="0.00" y="0.00" width="7.30" height="7.30" fill="rgb(248,244,239)"/><rect x="7.00" y="0.00" width="7.30" height="7.30" fill="rgb(232,235,238)"/><rect x="14.00" y="0.00" width="7.30" height="7.30" fill="rgb(240,235,228)"/><rect x="21.00" y="0.00" width="7.30" height="7.30" fill="rgb(241,244,248)"/><rect x="28.00" y="0.00" width="7.30" height="7.30" fill="rgb(240,245,254)"/><rect x="35.00" y="0.00" width="7.30" height="7.30" fill="rgb(245,240,233)"/><rect x="0.00" y="7.00" width="7.30" height="7.30" fill="rgb(183,186,193)"/><rect x="7.00" y="7.00" width="7.30" height="7.30" fill="rgb(220,218,217)"/><rect x="14.00" y="7.00" width="7.30" height="7.30" fill="rgb(203,207,212)"/><rect x="21.00" y="7.00" width="7.30" height="7.30" fill="rgb(219,222,227)"/><rect x="28.00" y="7.00" width="7.30" height="7.30" fill="rgb(224,228,237)"/><rect x="35.00" y="7.00" width="7.30" height="7.30" fill="rgb(219,214,206)"/><rect x="0.00" y="14.00" width="7.30" height="7.30" fill="rgb(246,246,248)"/><rect x="7.00" y="14.00" width="7.30" height="7.30" fill="rgb(241,245,250)"/><rect x="14.00" y="14.00" width="7.30" height="7.30" fill="rgb(234,229,230)"/><rect x="21.00" y="14.00" width="7.30" height="7.30" fill="rgb(245,243,242)"/><rect x="28.00" y="14.00" width="7.30" height="7.30" fill="rgb(232,233,234)"/><rect x="35.00" y="14.00" width="7.30" height="7.30" fill="rgb(231,229,226)"/></svg><svg class="a" style="left:209.80px;top:617.00px;shape-rendering:crispEdges" width="126" height="14" viewBox="0 0 126 14"><rect x="0.00" y="0.00" width="7.30" height="7.30" fill="rgb(206,202,195)"/><rect x="7.00" y="0.00" width="7.30" height="7.30" fill="rgb(219,224,232)"/><rect x="14.00" y="0.00" width="7.30" height="7.30" fill="rgb(186,190,197)"/><rect x="21.00" y="0.00" width="7.30" height="7.30" fill="rgb(231,231,229)"/><rect x="28.00" y="0.00" width="7.30" height="7.30" fill="rgb(202,205,206)"/><rect x="35.00" y="0.00" width="7.30" height="7.30" fill="rgb(188,184,177)"/><rect x="42.00" y="0.00" width="7.30" height="7.30" fill="rgb(222,219,214)"/><rect x="49.00" y="0.00" width="7.30" height="7.30" fill="rgb(221,221,222)"/><rect x="56.00" y="0.00" width="7.30" height="7.30" fill="rgb(211,216,224)"/><rect x="63.00" y="0.00" width="7.30" height="7.30" fill="rgb(234,230,227)"/><rect x="70.00" y="0.00" width="7.30" height="7.30" fill="rgb(185,185,185)"/><rect x="77.00" y="0.00" width="7.30" height="7.30" fill="rgb(182,179,175)"/><rect x="84.00" y="0.00" width="7.30" height="7.30" fill="rgb(211,207,206)"/><rect x="91.00" y="0.00" width="7.30" height="7.30" fill="rgb(201,203,205)"/><rect x="98.00" y="0.00" width="7.30" height="7.30" fill="rgb(208,212,222)"/><rect x="105.00" y="0.00" width="7.30" height="7.30" fill="rgb(207,211,219)"/><rect x="112.00" y="0.00" width="7.30" height="7.30" fill="rgb(180,184,194)"/><rect x="119.00" y="0.00" width="7.30" height="7.30" fill="rgb(182,184,185)"/><rect x="0.00" y="7.00" width="7.30" height="7.30" fill="rgb(134,134,138)"/><rect x="7.00" y="7.00" width="7.30" height="7.30" fill="rgb(169,173,182)"/><rect x="14.00" y="7.00" width="7.30" height="7.30" fill="rgb(164,162,163)"/><rect x="21.00" y="7.00" width="7.30" height="7.30" fill="rgb(173,173,172)"/><rect x="28.00" y="7.00" width="7.30" height="7.30" fill="rgb(134,137,140)"/><rect x="35.00" y="7.00" width="7.30" height="7.30" fill="rgb(112,113,112)"/><rect x="42.00" y="7.00" width="7.30" height="7.30" fill="rgb(180,177,172)"/><rect x="49.00" y="7.00" width="7.30" height="7.30" fill="rgb(148,149,153)"/><rect x="56.00" y="7.00" width="7.30" height="7.30" fill="rgb(180,179,179)"/><rect x="63.00" y="7.00" width="7.30" height="7.30" fill="rgb(164,164,170)"/><rect x="70.00" y="7.00" width="7.30" height="7.30" fill="rgb(172,170,166)"/><rect x="77.00" y="7.00" width="7.30" height="7.30" fill="rgb(101,106,113)"/><rect x="84.00" y="7.00" width="7.30" height="7.30" fill="rgb(131,134,136)"/><rect x="91.00" y="7.00" width="7.30" height="7.30" fill="rgb(163,163,167)"/><rect x="98.00" y="7.00" width="7.30" height="7.30" fill="rgb(129,130,128)"/><rect x="105.00" y="7.00" width="7.30" height="7.30" fill="rgb(183,179,176)"/><rect x="112.00" y="7.00" width="7.30" height="7.30" fill="rgb(138,143,147)"/><rect x="119.00" y="7.00" width="7.30" height="7.30" fill="rgb(125,122,120)"/></svg><svg class="a" style="left:335.80px;top:617.00px;shape-rendering:crispEdges" width="105" height="14" viewBox="0 0 105 14"><rect x="0.00" y="0.00" width="7.30" height="7.30" fill="rgb(218,217,213)"/><rect x="7.00" y="0.00" width="7.30" height="7.30" fill="rgb(218,217,222)"/><rect x="14.00" y="0.00" width="7.30" height="7.30" fill="rgb(209,210,213)"/><rect x="21.00" y="0.00" width="7.30" height="7.30" fill="rgb(231,236,242)"/><rect x="28.00" y="0.00" width="7.30" height="7.30" fill="rgb(231,235,241)"/><rect x="35.00" y="0.00" width="7.30" height="7.30" fill="rgb(211,210,211)"/><rect x="42.00" y="0.00" width="7.30" height="7.30" fill="rgb(222,226,233)"/><rect x="49.00" y="0.00" width="7.30" height="7.30" fill="rgb(228,229,231)"/><rect x="56.00" y="0.00" width="7.30" height="7.30" fill="rgb(239,237,238)"/><rect x="63.00" y="0.00" width="7.30" height="7.30" fill="rgb(219,219,225)"/><rect x="70.00" y="0.00" width="7.30" height="7.30" fill="rgb(205,210,215)"/><rect x="77.00" y="0.00" width="7.30" height="7.30" fill="rgb(248,244,244)"/><rect x="84.00" y="0.00" width="7.30" height="7.30" fill="rgb(238,233,231)"/><rect x="91.00" y="0.00" width="7.30" height="7.30" fill="rgb(239,240,244)"/><rect x="98.00" y="0.00" width="7.30" height="7.30" fill="rgb(236,234,231)"/><rect x="0.00" y="7.00" width="7.30" height="7.30" fill="rgb(202,206,209)"/><rect x="7.00" y="7.00" width="7.30" height="7.30" fill="rgb(197,192,188)"/><rect x="14.00" y="7.00" width="7.30" height="7.30" fill="rgb(185,189,196)"/><rect x="21.00" y="7.00" width="7.30" height="7.30" fill="rgb(225,223,226)"/><rect x="28.00" y="7.00" width="7.30" height="7.30" fill="rgb(175,180,182)"/><rect x="35.00" y="7.00" width="7.30" height="7.30" fill="rgb(223,218,216)"/><rect x="42.00" y="7.00" width="7.30" height="7.30" fill="rgb(179,175,177)"/><rect x="49.00" y="7.00" width="7.30" height="7.30" fill="rgb(211,210,208)"/><rect x="56.00" y="7.00" width="7.30" height="7.30" fill="rgb(236,233,236)"/><rect x="63.00" y="7.00" width="7.30" height="7.30" fill="rgb(191,188,189)"/><rect x="70.00" y="7.00" width="7.30" height="7.30" fill="rgb(216,213,210)"/><rect x="77.00" y="7.00" width="7.30" height="7.30" fill="rgb(224,226,227)"/><rect x="84.00" y="7.00" width="7.30" height="7.30" fill="rgb(211,207,207)"/><rect x="91.00" y="7.00" width="7.30" height="7.30" fill="rgb(197,194,192)"/><rect x="98.00" y="7.00" width="7.30" height="7.30" fill="rgb(224,226,233)"/></svg><div class="a" style="left:209.80px;top:631.00px;width:119.00px;height:7.00px;background:#e2e2e2"></div><svg class="a" style="left:209.80px;top:638.00px;shape-rendering:crispEdges" width="56" height="21" viewBox="0 0 56 21"><rect x="0.00" y="0.00" width="7.30" height="7.30" fill="rgb(242,239,234)"/><rect x="7.00" y="0.00" width="7.30" height="7.30" fill="rgb(233,235,238)"/><rect x="14.00" y="0.00" width="7.30" height="7.30" fill="rgb(228,232,242)"/><rect x="21.00" y="0.00" width="7.30" height="7.30" fill="rgb(229,232,240)"/><rect x="28.00" y="0.00" width="7.30" height="7.30" fill="rgb(243,244,248)"/><rect x="35.00" y="0.00" width="7.30" height="7.30" fill="rgb(247,242,239)"/><rect x="42.00" y="0.00" width="7.30" height="7.30" fill="rgb(238,238,239)"/><rect x="49.00" y="0.00" width="7.30" height="7.30" fill="rgb(239,243,252)"/><rect x="0.00" y="7.00" width="7.30" height="7.30" fill="rgb(188,192,197)"/><rect x="7.00" y="7.00" width="7.30" height="7.30" fill="rgb(226,230,235)"/><rect x="14.00" y="7.00" width="7.30" height="7.30" fill="rgb(192,191,188)"/><rect x="21.00" y="7.00" width="7.30" height="7.30" fill="rgb(208,210,212)"/><rect x="28.00" y="7.00" width="7.30" height="7.30" fill="rgb(193,195,194)"/><rect x="35.00" y="7.00" width="7.30" height="7.30" fill="rgb(196,191,189)"/><rect x="42.00" y="7.00" width="7.30" height="7.30" fill="rgb(224,219,216)"/><rect x="49.00" y="7.00" width="7.30" height="7.30" fill="rgb(207,205,207)"/><rect x="0.00" y="14.00" width="7.30" height="7.30" fill="rgb(242,239,235)"/><rect x="7.00" y="14.00" width="7.30" height="7.30" fill="rgb(234,232,232)"/><rect x="14.00" y="14.00" width="7.30" height="7.30" fill="rgb(235,240,246)"/><rect x="21.00" y="14.00" width="7.30" height="7.30" fill="rgb(229,231,230)"/><rect x="28.00" y="14.00" width="7.30" height="7.30" fill="rgb(243,239,240)"/><rect x="35.00" y="14.00" width="7.30" height="7.30" fill="rgb(238,238,244)"/><rect x="42.00" y="14.00" width="7.30" height="7.30" fill="rgb(227,231,237)"/><rect x="49.00" y="14.00" width="7.30" height="7.30" fill="rgb(232,234,242)"/></svg><div class="a" style="left:513.00px;top:611.50px;width:25.00px;height:19.00px;background:#198754;border-radius:6px"></div><svg class="a" style="left:519.50px;top:615.00px;" width="12" height="12" viewBox="0 0 12 12"><circle cx="6" cy="6" r="6.2" fill="#fff"/><path d="M6 2.8 V6.2 L8.2 7.8" stroke="#198754" stroke-width="0.8" fill="none" opacity="0.6"/></svg><div class="t " style="left:546.00px;top:612.66px;font-size:16px;line-height:24px;font-weight:700;color:#212529;letter-spacing:0.1px">Wedstrijdtafel</div><div class="t " style="left:546.50px;top:638.85px;font-size:14px;line-height:21px;font-weight:400;color:#6c757d;letter-spacing:-0.45px">Locatie:</div><svg class="a" style="left:596.00px;top:641.80px;shape-rendering:crispEdges" width="130" height="14" viewBox="0 0 130 14"><rect x="0.00" y="0.00" width="7.14" height="7.30" fill="rgb(240,243,250)"/><rect x="6.84" y="0.00" width="7.14" height="7.30" fill="rgb(236,234,236)"/><rect x="13.68" y="0.00" width="7.14" height="7.30" fill="rgb(232,230,230)"/><rect x="20.53" y="0.00" width="7.14" height="7.30" fill="rgb(236,235,234)"/><rect x="27.37" y="0.00" width="7.14" height="7.30" fill="rgb(233,238,247)"/><rect x="34.21" y="0.00" width="7.14" height="7.30" fill="rgb(247,244,245)"/><rect x="41.05" y="0.00" width="7.14" height="7.30" fill="rgb(238,235,234)"/><rect x="47.89" y="0.00" width="7.14" height="7.30" fill="rgb(234,233,233)"/><rect x="54.74" y="0.00" width="7.14" height="7.30" fill="rgb(230,234,239)"/><rect x="61.58" y="0.00" width="7.14" height="7.30" fill="rgb(245,243,247)"/><rect x="68.42" y="0.00" width="7.14" height="7.30" fill="rgb(243,242,238)"/><rect x="75.26" y="0.00" width="7.14" height="7.30" fill="rgb(225,230,235)"/><rect x="82.11" y="0.00" width="7.14" height="7.30" fill="rgb(235,238,240)"/><rect x="88.95" y="0.00" width="7.14" height="7.30" fill="rgb(225,230,235)"/><rect x="95.79" y="0.00" width="7.14" height="7.30" fill="rgb(236,232,227)"/><rect x="102.63" y="0.00" width="7.14" height="7.30" fill="rgb(242,244,246)"/><rect x="109.47" y="0.00" width="7.14" height="7.30" fill="rgb(231,236,245)"/><rect x="116.32" y="0.00" width="7.14" height="7.30" fill="rgb(234,234,237)"/><rect x="123.16" y="0.00" width="7.14" height="7.30" fill="rgb(232,231,232)"/><rect x="0.00" y="7.00" width="7.14" height="7.30" fill="rgb(214,212,214)"/><rect x="6.84" y="7.00" width="7.14" height="7.30" fill="rgb(199,199,203)"/><rect x="13.68" y="7.00" width="7.14" height="7.30" fill="rgb(219,223,224)"/><rect x="20.53" y="7.00" width="7.14" height="7.30" fill="rgb(219,217,215)"/><rect x="27.37" y="7.00" width="7.14" height="7.30" fill="rgb(207,210,217)"/><rect x="34.21" y="7.00" width="7.14" height="7.30" fill="rgb(217,214,212)"/><rect x="41.05" y="7.00" width="7.14" height="7.30" fill="rgb(195,200,203)"/><rect x="47.89" y="7.00" width="7.14" height="7.30" fill="rgb(216,215,217)"/><rect x="54.74" y="7.00" width="7.14" height="7.30" fill="rgb(203,206,212)"/><rect x="61.58" y="7.00" width="7.14" height="7.30" fill="rgb(205,203,204)"/><rect x="68.42" y="7.00" width="7.14" height="7.30" fill="rgb(232,228,222)"/><rect x="75.26" y="7.00" width="7.14" height="7.30" fill="rgb(195,192,191)"/><rect x="82.11" y="7.00" width="7.14" height="7.30" fill="rgb(207,208,215)"/><rect x="88.95" y="7.00" width="7.14" height="7.30" fill="rgb(228,231,237)"/><rect x="95.79" y="7.00" width="7.14" height="7.30" fill="rgb(199,202,210)"/><rect x="102.63" y="7.00" width="7.14" height="7.30" fill="rgb(211,212,214)"/><rect x="109.47" y="7.00" width="7.14" height="7.30" fill="rgb(186,190,194)"/><rect x="116.32" y="7.00" width="7.14" height="7.30" fill="rgb(211,214,216)"/><rect x="123.16" y="7.00" width="7.14" height="7.30" fill="rgb(227,229,236)"/></svg><div class="t " style="left:797.00px;top:612.76px;font-size:16px;line-height:24px;font-weight:400;color:#5a5f64;letter-spacing:0px">—</div><div class="t " style="left:897.00px;top:612.76px;font-size:16px;line-height:24px;font-weight:400;color:#212529;">1</div><div class="t " style="left:1026.00px;top:612.76px;font-size:16px;line-height:24px;font-weight:400;color:#212529;letter-spacing:-0.3px">12 jaar</div><div class="t " style="left:1193.00px;top:612.76px;font-size:16px;line-height:24px;font-weight:400;color:#212529;">-</div><svg class="a" style="left:1393.00px;top:615.50px;" width="17" height="17" viewBox="0 0 17 17"><circle cx="8.5" cy="8.5" r="8.3" fill="#dc3545"/><path d="M8.5 4.8 V9" stroke="#fff" stroke-width="1.6" stroke-linecap="round"/><circle cx="8.5" cy="11.9" r="0.95" fill="#fff"/></svg><div class="a" style="left:1474.00px;top:612.00px;width:379.00px;height:37.60px;background:#fff;border:1px solid #d5d9de;border-radius:6px;box-sizing:border-box"></div><svg class="a" style="left:1826.00px;top:627.50px;" width="12" height="7" viewBox="0 0 12 7"><path d="M1 1 L6 6 L11 1" stroke="#343a40" stroke-width="1.7" fill="none" stroke-linecap="round" stroke-linejoin="round"/></svg><div class="t " style="left:1487.50px;top:619.66px;font-size:16px;line-height:24px;font-weight:400;color:#212529;">- Geen toewijzing -</div><div class="a" style="left:45.00px;top:741.00px;width:1816.00px;height:1.00px;background:#dee2e6"></div><svg class="a" style="left:49.00px;top:687.00px;shape-rendering:crispEdges" width="90" height="14" viewBox="0 0 90 14"><rect x="0.00" y="0.00" width="7.22" height="7.30" fill="rgb(238,243,253)"/><rect x="6.92" y="0.00" width="7.22" height="7.30" fill="rgb(231,234,237)"/><rect x="13.85" y="0.00" width="7.22" height="7.30" fill="rgb(210,205,199)"/><rect x="20.77" y="0.00" width="7.22" height="7.30" fill="rgb(239,239,239)"/><rect x="27.69" y="0.00" width="7.22" height="7.30" fill="rgb(211,209,209)"/><rect x="34.62" y="0.00" width="7.22" height="7.30" fill="rgb(215,216,219)"/><rect x="41.54" y="0.00" width="7.22" height="7.30" fill="rgb(212,214,218)"/><rect x="48.46" y="0.00" width="7.22" height="7.30" fill="rgb(234,236,239)"/><rect x="55.38" y="0.00" width="7.22" height="7.30" fill="rgb(244,241,241)"/><rect x="62.31" y="0.00" width="7.22" height="7.30" fill="rgb(216,214,215)"/><rect x="69.23" y="0.00" width="7.22" height="7.30" fill="rgb(226,224,228)"/><rect x="76.15" y="0.00" width="7.22" height="7.30" fill="rgb(238,236,240)"/><rect x="83.08" y="0.00" width="7.22" height="7.30" fill="rgb(222,217,216)"/><rect x="0.00" y="7.00" width="7.22" height="7.30" fill="rgb(187,191,199)"/><rect x="6.92" y="7.00" width="7.22" height="7.30" fill="rgb(229,234,239)"/><rect x="13.85" y="7.00" width="7.22" height="7.30" fill="rgb(167,170,179)"/><rect x="20.77" y="7.00" width="7.22" height="7.30" fill="rgb(228,233,239)"/><rect x="27.69" y="7.00" width="7.22" height="7.30" fill="rgb(198,201,202)"/><rect x="34.62" y="7.00" width="7.22" height="7.30" fill="rgb(230,229,225)"/><rect x="41.54" y="7.00" width="7.22" height="7.30" fill="rgb(168,165,163)"/><rect x="48.46" y="7.00" width="7.22" height="7.30" fill="rgb(194,191,188)"/><rect x="55.38" y="7.00" width="7.22" height="7.30" fill="rgb(176,173,172)"/><rect x="62.31" y="7.00" width="7.22" height="7.30" fill="rgb(165,166,168)"/><rect x="69.23" y="7.00" width="7.22" height="7.30" fill="rgb(177,172,169)"/><rect x="76.15" y="7.00" width="7.22" height="7.30" fill="rgb(192,190,190)"/><rect x="83.08" y="7.00" width="7.22" height="7.30" fill="rgb(223,227,232)"/></svg><svg class="a" style="left:49.00px;top:708.00px;shape-rendering:crispEdges" width="42" height="21" viewBox="0 0 42 21"><rect x="0.00" y="0.00" width="7.30" height="7.30" fill="rgb(233,238,243)"/><rect x="7.00" y="0.00" width="7.30" height="7.30" fill="rgb(247,248,253)"/><rect x="14.00" y="0.00" width="7.30" height="7.30" fill="rgb(231,232,230)"/><rect x="21.00" y="0.00" width="7.30" height="7.30" fill="rgb(238,237,234)"/><rect x="28.00" y="0.00" width="7.30" height="7.30" fill="rgb(238,242,252)"/><rect x="35.00" y="0.00" width="7.30" height="7.30" fill="rgb(242,244,251)"/><rect x="0.00" y="7.00" width="7.30" height="7.30" fill="rgb(232,228,226)"/><rect x="7.00" y="7.00" width="7.30" height="7.30" fill="rgb(219,222,230)"/><rect x="14.00" y="7.00" width="7.30" height="7.30" fill="rgb(203,201,204)"/><rect x="21.00" y="7.00" width="7.30" height="7.30" fill="rgb(194,189,182)"/><rect x="28.00" y="7.00" width="7.30" height="7.30" fill="rgb(212,212,215)"/><rect x="35.00" y="7.00" width="7.30" height="7.30" fill="rgb(205,200,194)"/><rect x="0.00" y="14.00" width="7.30" height="7.30" fill="rgb(236,240,242)"/><rect x="7.00" y="14.00" width="7.30" height="7.30" fill="rgb(232,236,245)"/><rect x="14.00" y="14.00" width="7.30" height="7.30" fill="rgb(235,240,250)"/><rect x="21.00" y="14.00" width="7.30" height="7.30" fill="rgb(235,231,227)"/><rect x="28.00" y="14.00" width="7.30" height="7.30" fill="rgb(246,243,244)"/><rect x="35.00" y="14.00" width="7.30" height="7.30" fill="rgb(238,236,240)"/></svg><div class="a" style="left:213.00px;top:694.00px;width:16.00px;height:1.20px;background:#5a5f64"></div><div class="a" style="left:513.00px;top:680.50px;width:25.00px;height:19.00px;background:#dc3545;border-radius:6px"></div><svg class="a" style="left:520.00px;top:685.20px;" width="14" height="12" viewBox="0 0 14 12"><path d="M0 1 A1 1 0 0 1 1 0 H9.4 A1 1 0 0 1 10.4 1 V10.6 A1 1 0 0 1 9.4 11.6 H1 A1 1 0 0 1 0 10.6 Z" fill="#fff"/><path d="M10.2 1.8 H11 A2.4 2.4 0 0 1 13.4 4.2 V5.4 A2.4 2.4 0 0 1 11 7.8 H10.2" stroke="#fff" stroke-width="1.7" fill="none"/><rect x="2.4" y="3" width="5.4" height="5.4" fill="#f6d8da" opacity="0.5"/></svg><div class="t " style="left:546.00px;top:681.66px;font-size:16px;line-height:24px;font-weight:700;color:#212529;letter-spacing:-0.3px">Bardienst</div><div class="t " style="left:546.50px;top:707.85px;font-size:14px;line-height:21px;font-weight:400;color:#6c757d;letter-spacing:-0.45px">Locatie:</div><svg class="a" style="left:596.00px;top:710.80px;shape-rendering:crispEdges" width="46" height="14" viewBox="0 0 46 14"><rect x="0.00" y="0.00" width="6.87" height="7.30" fill="rgb(222,224,225)"/><rect x="6.57" y="0.00" width="6.87" height="7.30" fill="rgb(243,244,243)"/><rect x="13.14" y="0.00" width="6.87" height="7.30" fill="rgb(238,239,238)"/><rect x="19.71" y="0.00" width="6.87" height="7.30" fill="rgb(235,230,229)"/><rect x="26.29" y="0.00" width="6.87" height="7.30" fill="rgb(235,234,238)"/><rect x="32.86" y="0.00" width="6.87" height="7.30" fill="rgb(232,231,235)"/><rect x="39.43" y="0.00" width="6.87" height="7.30" fill="rgb(234,239,245)"/><rect x="0.00" y="7.00" width="6.87" height="7.30" fill="rgb(185,187,194)"/><rect x="6.57" y="7.00" width="6.87" height="7.30" fill="rgb(224,220,220)"/><rect x="13.14" y="7.00" width="6.87" height="7.30" fill="rgb(221,226,234)"/><rect x="19.71" y="7.00" width="6.87" height="7.30" fill="rgb(199,196,196)"/><rect x="26.29" y="7.00" width="6.87" height="7.30" fill="rgb(192,194,199)"/><rect x="32.86" y="7.00" width="6.87" height="7.30" fill="rgb(193,193,190)"/><rect x="39.43" y="7.00" width="6.87" height="7.30" fill="rgb(191,190,190)"/></svg><div class="t " style="left:797.00px;top:681.76px;font-size:16px;line-height:24px;font-weight:400;color:#212529;letter-spacing:0px">± 1,5 uur</div><div class="t " style="left:897.00px;top:681.76px;font-size:16px;line-height:24px;font-weight:400;color:#212529;">1</div><div class="t " style="left:1026.00px;top:681.76px;font-size:16px;line-height:24px;font-weight:400;color:#212529;letter-spacing:-0.3px">18 jaar</div><div class="t " style="left:1193.00px;top:681.76px;font-size:16px;line-height:24px;font-weight:400;color:#212529;">-</div><svg class="a" style="left:1393.00px;top:684.50px;" width="17" height="17" viewBox="0 0 17 17"><circle cx="8.5" cy="8.5" r="8.3" fill="#dc3545"/><path d="M8.5 4.8 V9" stroke="#fff" stroke-width="1.6" stroke-linecap="round"/><circle cx="8.5" cy="11.9" r="0.95" fill="#fff"/></svg><div class="a" style="left:1474.00px;top:681.00px;width:379.00px;height:37.60px;background:#fff;border:1px solid #d5d9de;border-radius:6px;box-sizing:border-box"></div><svg class="a" style="left:1826.00px;top:696.50px;" width="12" height="7" viewBox="0 0 12 7"><path d="M1 1 L6 6 L11 1" stroke="#343a40" stroke-width="1.7" fill="none" stroke-linecap="round" stroke-linejoin="round"/></svg><div class="t " style="left:1487.50px;top:688.66px;font-size:16px;line-height:24px;font-weight:400;color:#212529;">- Geen toewijzing -</div><div class="a" style="left:45.00px;top:810.00px;width:1816.00px;height:1.00px;background:#dee2e6"></div><svg class="a" style="left:49.00px;top:754.00px;shape-rendering:crispEdges" width="91" height="14" viewBox="0 0 91 14"><rect x="0.00" y="0.00" width="7.30" height="7.30" fill="rgb(221,219,218)"/><rect x="7.00" y="0.00" width="7.30" height="7.30" fill="rgb(223,221,216)"/><rect x="14.00" y="0.00" width="7.30" height="7.30" fill="rgb(226,221,217)"/><rect x="21.00" y="0.00" width="7.30" height="7.30" fill="rgb(212,214,213)"/><rect x="28.00" y="0.00" width="7.30" height="7.30" fill="rgb(216,216,215)"/><rect x="35.00" y="0.00" width="7.30" height="7.30" fill="rgb(247,243,240)"/><rect x="42.00" y="0.00" width="7.30" height="7.30" fill="rgb(203,205,213)"/><rect x="49.00" y="0.00" width="7.30" height="7.30" fill="rgb(212,215,224)"/><rect x="56.00" y="0.00" width="7.30" height="7.30" fill="rgb(226,231,240)"/><rect x="63.00" y="0.00" width="7.30" height="7.30" fill="rgb(228,223,219)"/><rect x="70.00" y="0.00" width="7.30" height="7.30" fill="rgb(243,244,247)"/><rect x="77.00" y="0.00" width="7.30" height="7.30" fill="rgb(211,215,221)"/><rect x="84.00" y="0.00" width="7.30" height="7.30" fill="rgb(227,224,220)"/><rect x="0.00" y="7.00" width="7.30" height="7.30" fill="rgb(232,233,240)"/><rect x="7.00" y="7.00" width="7.30" height="7.30" fill="rgb(159,163,164)"/><rect x="14.00" y="7.00" width="7.30" height="7.30" fill="rgb(198,200,206)"/><rect x="21.00" y="7.00" width="7.30" height="7.30" fill="rgb(171,172,175)"/><rect x="28.00" y="7.00" width="7.30" height="7.30" fill="rgb(191,195,198)"/><rect x="35.00" y="7.00" width="7.30" height="7.30" fill="rgb(209,214,223)"/><rect x="42.00" y="7.00" width="7.30" height="7.30" fill="rgb(227,225,220)"/><rect x="49.00" y="7.00" width="7.30" height="7.30" fill="rgb(233,231,227)"/><rect x="56.00" y="7.00" width="7.30" height="7.30" fill="rgb(199,195,189)"/><rect x="63.00" y="7.00" width="7.30" height="7.30" fill="rgb(193,198,202)"/><rect x="70.00" y="7.00" width="7.30" height="7.30" fill="rgb(216,215,216)"/><rect x="77.00" y="7.00" width="7.30" height="7.30" fill="rgb(157,162,170)"/><rect x="84.00" y="7.00" width="7.30" height="7.30" fill="rgb(209,207,210)"/></svg><svg class="a" style="left:49.00px;top:782.00px;shape-rendering:crispEdges" width="42" height="14" viewBox="0 0 42 14"><rect x="0.00" y="0.00" width="7.30" height="7.30" fill="rgb(220,222,224)"/><rect x="7.00" y="0.00" width="7.30" height="7.30" fill="rgb(214,211,205)"/><rect x="14.00" y="0.00" width="7.30" height="7.30" fill="rgb(201,199,194)"/><rect x="21.00" y="0.00" width="7.30" height="7.30" fill="rgb(226,222,223)"/><rect x="28.00" y="0.00" width="7.30" height="7.30" fill="rgb(202,201,200)"/><rect x="35.00" y="0.00" width="7.30" height="7.30" fill="rgb(232,231,230)"/><rect x="0.00" y="7.00" width="7.30" height="7.30" fill="rgb(235,240,245)"/><rect x="7.00" y="7.00" width="7.30" height="7.30" fill="rgb(223,225,233)"/><rect x="14.00" y="7.00" width="7.30" height="7.30" fill="rgb(234,233,234)"/><rect x="21.00" y="7.00" width="7.30" height="7.30" fill="rgb(231,227,220)"/><rect x="28.00" y="7.00" width="7.30" height="7.30" fill="rgb(221,222,228)"/><rect x="35.00" y="7.00" width="7.30" height="7.30" fill="rgb(237,234,228)"/></svg><div class="a" style="left:213.00px;top:763.00px;width:16.00px;height:1.20px;background:#5a5f64"></div><div class="a" style="left:513.00px;top:749.50px;width:25.00px;height:19.00px;background:#dc3545;border-radius:6px"></div><svg class="a" style="left:520.00px;top:754.20px;" width="14" height="12" viewBox="0 0 14 12"><path d="M0 1 A1 1 0 0 1 1 0 H9.4 A1 1 0 0 1 10.4 1 V10.6 A1 1 0 0 1 9.4 11.6 H1 A1 1 0 0 1 0 10.6 Z" fill="#fff"/><path d="M10.2 1.8 H11 A2.4 2.4 0 0 1 13.4 4.2 V5.4 A2.4 2.4 0 0 1 11 7.8 H10.2" stroke="#fff" stroke-width="1.7" fill="none"/><rect x="2.4" y="3" width="5.4" height="5.4" fill="#f6d8da" opacity="0.5"/></svg><div class="t " style="left:546.00px;top:750.66px;font-size:16px;line-height:24px;font-weight:700;color:#212529;letter-spacing:-0.3px">Bardienst</div><div class="t " style="left:546.50px;top:776.85px;font-size:14px;line-height:21px;font-weight:400;color:#6c757d;letter-spacing:-0.45px">Locatie:</div><svg class="a" style="left:596.00px;top:779.80px;shape-rendering:crispEdges" width="47" height="14" viewBox="0 0 47 14"><rect x="0.00" y="0.00" width="7.01" height="7.30" fill="rgb(247,244,238)"/><rect x="6.71" y="0.00" width="7.01" height="7.30" fill="rgb(235,232,230)"/><rect x="13.43" y="0.00" width="7.01" height="7.30" fill="rgb(240,239,238)"/><rect x="20.14" y="0.00" width="7.01" height="7.30" fill="rgb(228,224,218)"/><rect x="26.86" y="0.00" width="7.01" height="7.30" fill="rgb(228,229,236)"/><rect x="33.57" y="0.00" width="7.01" height="7.30" fill="rgb(230,226,222)"/><rect x="40.29" y="0.00" width="7.01" height="7.30" fill="rgb(227,223,224)"/><rect x="0.00" y="7.00" width="7.01" height="7.30" fill="rgb(196,191,183)"/><rect x="6.71" y="7.00" width="7.01" height="7.30" fill="rgb(232,231,230)"/><rect x="13.43" y="7.00" width="7.01" height="7.30" fill="rgb(198,194,190)"/><rect x="20.14" y="7.00" width="7.01" height="7.30" fill="rgb(214,212,209)"/><rect x="26.86" y="7.00" width="7.01" height="7.30" fill="rgb(217,220,221)"/><rect x="33.57" y="7.00" width="7.01" height="7.30" fill="rgb(227,224,220)"/><rect x="40.29" y="7.00" width="7.01" height="7.30" fill="rgb(191,194,202)"/></svg><div class="t " style="left:797.00px;top:750.76px;font-size:16px;line-height:24px;font-weight:400;color:#212529;letter-spacing:0px">± 1,5 uur</div><div class="t " style="left:897.00px;top:750.76px;font-size:16px;line-height:24px;font-weight:400;color:#212529;">1</div><div class="t " style="left:1026.00px;top:750.76px;font-size:16px;line-height:24px;font-weight:400;color:#212529;letter-spacing:-0.3px">18 jaar</div><div class="t " style="left:1193.00px;top:750.76px;font-size:16px;line-height:24px;font-weight:400;color:#212529;">-</div><svg class="a" style="left:1393.00px;top:753.50px;" width="17" height="17" viewBox="0 0 17 17"><circle cx="8.5" cy="8.5" r="8.3" fill="#dc3545"/><path d="M8.5 4.8 V9" stroke="#fff" stroke-width="1.6" stroke-linecap="round"/><circle cx="8.5" cy="11.9" r="0.95" fill="#fff"/></svg><div class="a" style="left:1474.00px;top:750.00px;width:379.00px;height:37.60px;background:#fff;border:1px solid #d5d9de;border-radius:6px;box-sizing:border-box"></div><svg class="a" style="left:1826.00px;top:765.50px;" width="12" height="7" viewBox="0 0 12 7"><path d="M1 1 L6 6 L11 1" stroke="#343a40" stroke-width="1.7" fill="none" stroke-linecap="round" stroke-linejoin="round"/></svg><div class="t " style="left:1487.50px;top:757.66px;font-size:16px;line-height:24px;font-weight:400;color:#212529;">- Geen toewijzing -</div><div class="a" style="left:1474.00px;top:366.50px;width:16.00px;height:16.00px;background:#0d6efd;border-radius:4px"></div><svg class="a" style="left:1477.00px;top:370.00px;" width="10" height="9" viewBox="0 0 10 9"><path d="M1.2 4.6 L3.8 7 L8.8 1.8" stroke="#fff" stroke-width="1.8" fill="none" stroke-linecap="round" stroke-linejoin="round"/></svg><div class="t " style="left:1498.00px;top:365.35px;font-size:14px;line-height:21px;font-weight:400;color:#212529;letter-spacing:-0.1px">Begeleiding gewenst</div><div class="t " style="left:45.50px;top:848.95px;font-size:14px;line-height:21px;font-weight:400;color:#6c757d;letter-spacing:-0.25px">Totaal: <b style="color:#495057">7</b> taken</div><div class="t " style="left:1717.50px;top:849.15px;font-size:14px;line-height:21px;font-weight:700;color:#212529;letter-spacing:-0.4px">Per pagina:</div><div class="a" style="left:1799.50px;top:843.50px;width:61.00px;height:30.50px;background:#fff;border:1px solid #dee2e6;border-radius:5px;box-sizing:border-box"></div><div class="t " style="left:1808.50px;top:849.15px;font-size:14px;line-height:21px;font-weight:400;color:#212529;">10</div><svg class="a" style="left:1834.00px;top:855.50px;" width="11.5" height="7" viewBox="0 0 11.5 7"><path d="M1 1 L6 6 L11 1" stroke="#343a40" stroke-width="1.6" fill="none" stroke-linecap="round" stroke-linejoin="round"/></svg><div class="a" style="left:0.00px;top:904.00px;width:1905.00px;height:41.00px;background:#f8f9fa;border-top:1px solid #dee2e6;box-sizing:border-box"></div><div class="t " style="left:856.00px;top:916.35px;font-size:14px;line-height:21px;font-weight:400;color:#6c757d;letter-spacing:0.05px">© Takenplanner - <b style="color:#495057">HV Forte '83</b></div><div class="a" style="left:1870.00px;top:912.00px;width:27.00px;height:26.00px;border:1px solid #495057;border-radius:5px;box-sizing:border-box;background:#f8f9fa"></div><svg class="a" style="left:1875.50px;top:918.50px;" width="16" height="15" viewBox="0 0 16 15"><circle cx="6" cy="3.4" r="3.3" fill="#5c636a"/><path d="M0 14.6 C0 10.2 2.2 8 6 8 C7.4 8 8.4 8.3 9.2 8.8 V14.6 Z" fill="#5c636a"/><path d="M9.8 8.6 L13 7.4 L16 8.6 C16 12 15 13.8 13 15 C11 13.8 9.8 12 9.8 8.6 Z" fill="#5c636a"/><path d="M13 8.6 V13.6 C12 12.8 11.2 11.6 11.1 9.4 Z" fill="#f8f9fa" opacity="0.9"/></svg><div class="a" style="left:1355.00px;top:143.00px;width:400.00px;height:216.50px;background:#fff;border:1px solid #d0d1d3;border-radius:8px;box-sizing:border-box;overflow:hidden"></div><div class="a" style="left:1356.00px;top:144.00px;width:398.00px;height:36.00px;background:#e9ecef;border-bottom:1px solid #d0d1d3;border-radius:7px 7px 0 0;box-sizing:border-box"></div><svg class="a" style="left:1546.50px;top:135.50px;" width="17" height="9" viewBox="0 0 17 9"><path d="M0 8.6 L8.5 0.4 L17 8.6" stroke="#d0d1d3" stroke-width="1" fill="#fff"/><rect x="0.9" y="8" width="15.2" height="1" fill="#fff"/></svg><svg class="a" style="left:1374.00px;top:154.00px;" width="16" height="16" viewBox="0 0 16 16"><circle cx="8" cy="8" r="8" fill="#212529"/><circle cx="8" cy="4.6" r="1.1" fill="#e9ecef"/><path d="M6.2 7 H8.8 V11 H9.8 V12.2 H6.2 V11 H7.2 V8.2 H6.2 Z" fill="#e9ecef"/></svg><div class="t " style="left:1400.50px;top:151.36px;font-size:16px;line-height:24px;font-weight:400;color:#212529;">Verdelingsregels</div><div class="a" style="left:1372.80px;top:203.90px;width:4.60px;height:4.60px;background:#212529;border-radius:50%"></div><div class="t " style="left:1388.50px;top:196.96px;font-size:12.25px;line-height:18px;font-weight:400;color:#212529;">Alleen spelende teamleden worden ingedeeld (stafleden worden</div><div class="t " style="left:1388.50px;top:215.86px;font-size:12.25px;line-height:18px;font-weight:400;color:#212529;">niet ingedeeld, tenzij ze ook spelend teamlid zijn).</div><div class="a" style="left:1372.80px;top:240.70px;width:4.60px;height:4.60px;background:#212529;border-radius:50%"></div><div class="t " style="left:1388.50px;top:233.76px;font-size:12.25px;line-height:18px;font-weight:400;color:#212529;">Alleen toekomstige taken zonder toewijzing worden verdeeld.</div><div class="a" style="left:1372.80px;top:258.70px;width:4.60px;height:4.60px;background:#212529;border-radius:50%"></div><div class="t " style="left:1388.50px;top:251.76px;font-size:12.25px;line-height:18px;font-weight:400;color:#212529;">Leden worden nooit meerdere keren op één dag ingedeeld.</div><div class="a" style="left:1372.80px;top:277.50px;width:4.60px;height:4.60px;background:#212529;border-radius:50%"></div><div class="t " style="left:1388.50px;top:270.56px;font-size:12.25px;line-height:18px;font-weight:400;color:#212529;">Alleen leden met het vereiste diploma (indien van toepassing)</div><div class="t " style="left:1388.50px;top:289.16px;font-size:12.25px;line-height:18px;font-weight:400;color:#212529;">en de minimumleeftijd voor de taak worden ingedeeld.</div><div class="a" style="left:1372.80px;top:313.90px;width:4.60px;height:4.60px;background:#212529;border-radius:50%"></div><div class="t " style="left:1388.50px;top:306.96px;font-size:12.25px;line-height:18px;font-weight:400;color:#212529;">De taken worden zo eerlijk mogelijk verdeeld op basis van het</div><div class="t " style="left:1388.50px;top:325.86px;font-size:12.25px;line-height:18px;font-weight:400;color:#212529;">aantal taken en het gewicht van de taken.</div>
</body></html>
